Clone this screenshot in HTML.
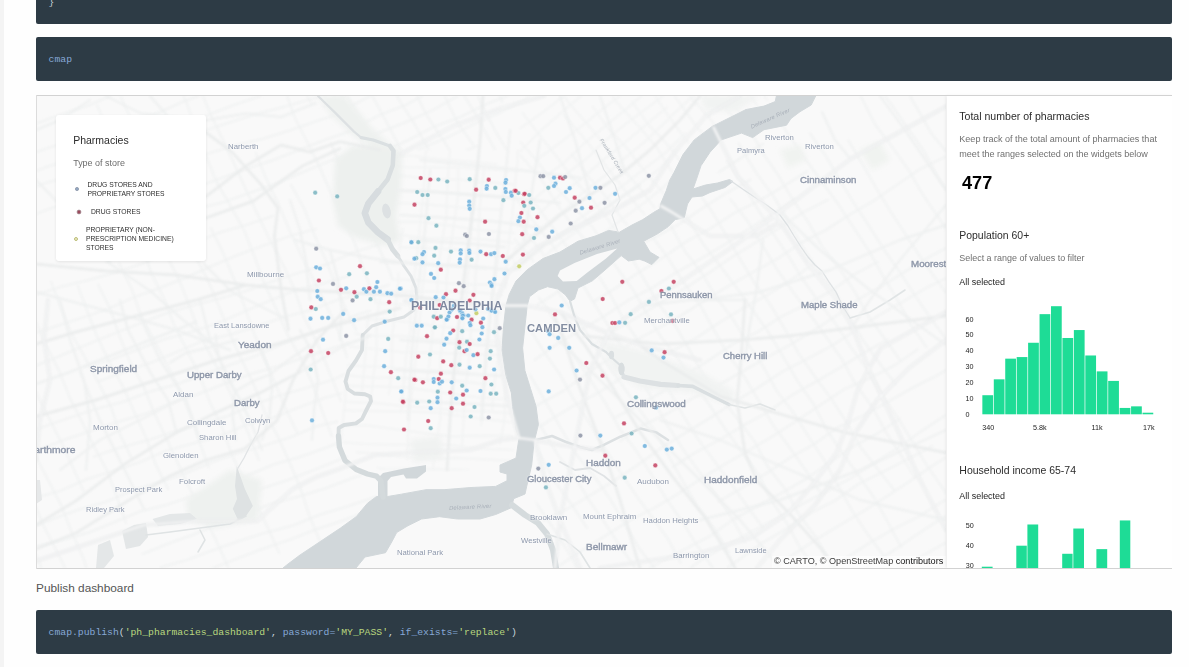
<!DOCTYPE html>
<html><head><meta charset="utf-8">
<style>
*{box-sizing:border-box;margin:0;padding:0}
html,body{width:1189px;height:667px;overflow:hidden;background:#fefefe;font-family:"Liberation Sans",sans-serif;}
body{position:relative}
.strip{position:absolute;left:0;top:0;width:4px;height:667px;background:#f4f4f4}
.code{position:absolute;left:36px;width:1136px;background:#2d3b45;border-radius:2px;font-family:"Liberation Mono",monospace;font-size:9.75px;color:#c8d3da;white-space:pre}
.code>span{position:absolute;left:12.6px;line-height:1}
.b{color:#86a8d6}.g{color:#b9d77f}
#c1{top:-10px;height:34px}
#c2{top:37px;height:44px}
#c3{top:610px;height:43.5px}
#map{position:absolute;left:36px;top:96px;width:910px;height:472px;background:#f9f9f9;overflow:hidden}
#panel{position:absolute;left:946.6px;top:96px;width:225.4px;height:472px;background:#fff;box-shadow:-1px 0 3px rgba(0,0,0,.09)}
#clip{position:absolute;left:0;top:0;width:1172px;height:568px;overflow:hidden}
.ln{position:absolute;background:#d2d2d2}
.t{position:absolute;white-space:nowrap;line-height:1}
.ml{position:absolute;white-space:nowrap;line-height:1;color:#8891a2;transform-origin:0 0}
#legend{position:absolute;left:55.5px;top:115px;width:150px;height:146px;background:#fff;border-radius:3px;box-shadow:0 1px 3px rgba(0,0,0,.09)}
</style></head><body>
<div class="strip"></div>
<div class="code" id="c1"><span style="top:8px">}</span></div>
<div class="code" id="c2"><span class="b" style="top:18.4px">cmap</span></div>
<div id="clip">
<div id="map">
<svg width="910" height="472" viewBox="36 96 910 472" style="position:absolute;left:0;top:0">
<defs><filter id="rb" x="-5%" y="-5%" width="110%" height="110%"><feGaussianBlur stdDeviation="0.8"/></filter><filter id="wb" x="-5%" y="-5%" width="110%" height="110%"><feGaussianBlur stdDeviation="0.5"/></filter><filter id="pb" x="-5%" y="-5%" width="110%" height="110%"><feGaussianBlur stdDeviation="2.5"/></filter></defs>
<g filter="url(#rb)"><clipPath id="m1"><polygon points="36,96 320,96 385,150 360,215 400,270 350,340 335,440 380,500 283,568 36,568"/></clipPath>
<g clip-path="url(#m1)" fill="none" stroke="#eff1f1" stroke-width="1.5" stroke-linejoin="round">
<polyline points="-136.3,149.2 -109.7,140.6 -83.3,131.2 -57.4,120.4 -30.7,112.0 -4.7,101.3 21.9,92.7 48.0,82.4 74.1,72.4 100.9,64.1 128.2,57.5 154.3,47.1 180.6,37.5 207.5,29.8 234.9,23.3 261.5,14.6 287.8,4.9 315.1,-2.0 340.7,-13.5"/>
<polyline points="-98.1,168.2 -71.8,158.5 -44.7,151.3 -18.7,140.8 8.0,132.4 34.8,124.1 61.1,114.5 87.7,105.7 113.5,94.7 139.4,84.1 165.7,74.4 192.7,66.9 219.3,58.0 245.7,48.6"/>
<polyline points="-55.3,184.3 -28.6,175.8 -2.7,165.1 23.9,156.3 50.4,147.1 77.4,139.6 104.1,131.1 130.0,120.4 157.2,113.2 182.8,101.8 209.1,92.1 236.0,84.1 261.8,73.1 288.3,64.0"/>
<polyline points="-6.1,184.7 20.9,177.2 47.0,166.8 73.7,158.4 100.2,149.5 126.7,140.4 153.0,130.7 179.9,123.0 206.9,115.4 233.1,105.3 259.6,96.4 285.2,84.6 311.9,76.3 338.5,67.6 365.7,60.3 392.4,52.0"/>
<polyline points="-57.7,222.1 -31.1,213.2 -5.0,203.0 21.1,192.7 47.2,182.4 74.4,175.6 100.5,165.4 126.9,156.0 153.5,147.3 180.8,140.6 206.8,129.9 233.4,121.2 260.1,112.9 287.3,105.9 314.3,98.2 341.2,90.4 367.1,79.7"/>
<polyline points="-54.1,250.2 -28.3,239.1 -2.4,228.5 23.8,218.4 50.0,208.6 76.7,200.0 103.5,191.8 129.7,182.0 155.5,171.1 182.2,162.4 208.7,153.4 235.5,145.3 262.9,138.8 289.6,130.5 316.1,121.3 342.7,112.6 369.4,104.0 395.0,92.5 422.2,85.4"/>
<polyline points="59.6,238.8 85.9,229.4 111.8,218.6 138.7,210.6 164.6,199.8 190.6,189.3 216.9,179.8 243.2,170.1 269.8,161.3 295.9,151.2 322.0,141.0 348.4,131.8 374.8,122.3 401.6,114.1"/>
<polyline points="64.8,254.0 91.0,244.1 117.4,234.8 143.8,225.5 169.9,215.3 197.2,208.5 224.5,201.9 250.9,192.5 277.3,183.1 303.1,172.0 329.0,161.4 355.4,152.2 381.8,142.6"/>
<polyline points="-69.7,335.8 -43.3,326.4 -17.5,315.3 9.1,306.4 34.8,295.2 61.5,286.6 88.8,280.0 115.8,272.3 142.4,263.6 168.3,252.9 194.5,242.9 220.4,232.2 247.4,224.6 273.9,215.6"/>
<polyline points="-26.1,350.7 1.0,343.5 27.8,335.4 54.4,326.8 81.1,318.1 107.6,309.1 133.3,297.6 159.5,288.0 185.6,277.7 211.3,266.2 237.1,255.2 263.4,245.6 289.7,236.1 316.8,228.6"/>
<polyline points="8.4,373.3 35.5,365.8 61.5,355.3 87.3,344.4 113.3,333.9 139.4,323.6 165.5,313.5 192.4,305.5 219.6,298.6 246.6,290.9 272.9,281.3 299.5,272.6 326.3,264.5 352.0,252.9 378.7,244.5 405.7,237.0 432.4,228.6 459.1,220.0 485.2,210.0"/>
<polyline points="84.2,366.9 111.3,359.7 137.4,349.5 163.6,339.5 190.7,332.1 217.3,323.4 243.0,312.1 268.8,301.1 294.8,290.5 322.1,283.7 349.0,275.9"/>
<polyline points="97.8,381.7 124.0,371.8 150.6,362.9 176.5,352.1 202.3,341.1 229.7,334.8 256.5,326.5 283.0,317.4 310.1,310.2 336.3,300.4 363.3,292.7 390.1,284.5 415.9,273.3 441.8,262.7 468.0,252.6 494.1,242.5"/>
<polyline points="-10.2,443.7 17.1,436.7 43.3,426.9 69.7,417.6 96.3,408.9 123.4,401.7 149.6,391.8 176.7,384.3 203.0,374.7 229.3,365.3 255.7,355.9 281.3,344.2 307.8,335.0 333.8,324.6 359.7,313.7 386.9,306.8"/>
<polyline points="40.5,449.0 66.7,439.0 93.2,430.1 119.8,421.3 146.7,413.5 172.5,402.4 199.1,393.7 225.2,383.5 251.5,373.7 278.5,366.2 305.0,357.2 331.6,348.5 358.5,340.5 385.5,333.0 411.7,323.1 438.2,314.1 464.6,304.6"/>
<polyline points="93.2,456.9 119.6,447.7 146.8,440.6 173.5,432.0 200.3,424.0 227.3,416.2 253.0,405.0 279.4,395.6 306.4,387.9 333.1,379.6 358.7,367.8 384.4,356.6 410.8,347.2"/>
<polyline points="7.1,506.2 34.0,498.3 60.9,490.6 86.6,479.2 113.4,470.9 140.0,462.1 165.7,450.9 192.8,443.5 219.9,436.2 245.7,425.0 272.7,417.7 298.8,407.4 325.1,397.8 352.2,390.6"/>
<polyline points="0.4,539.3 26.6,529.4 52.7,519.0 79.0,509.5 106.0,501.9 131.8,490.7 158.5,482.4 185.1,473.5 210.9,462.5 237.4,453.4 264.3,445.6 291.0,437.0 316.9,426.3 344.4,420.1 371.3,412.4 398.5,405.3 424.1,393.8"/>
<polyline points="-18.0,566.5 8.0,555.9 34.5,547.0 61.8,540.2 88.8,532.5 114.7,522.0 140.7,511.3 167.9,504.4 194.4,495.5 221.2,487.1 246.9,475.8 272.7,464.8 299.7,457.0 326.1,447.8 352.0,437.0 379.4,430.5 406.1,422.0 433.0,414.2 458.7,402.9 485.8,395.5"/>
<polyline points="155.7,525.9 182.3,517.2 209.5,510.1 235.5,499.6 261.4,488.7 288.0,480.0 314.1,469.9 340.1,459.4 366.3,449.5 392.4,439.2 418.8,429.8 445.3,420.9"/>
<polyline points="142.0,554.3 167.9,543.7 194.3,534.2 220.1,523.2 246.5,513.7 272.4,503.2 299.7,496.3 326.4,488.0 352.6,478.0 379.3,469.4 406.6,462.9"/>
<polyline points="160.1,567.5 187.1,559.9 213.3,550.0 239.7,540.8 266.4,532.4 293.6,525.2 319.6,514.7 346.4,506.8 373.0,498.0 399.5,488.8 425.6,478.6 451.7,468.4"/>
<polyline points="25.7,633.7 51.7,623.3 77.7,612.7 103.6,602.0 130.9,595.1 158.0,587.9 184.7,579.4 210.7,569.0 236.8,558.6 263.0,548.8 289.5,539.9 315.6,529.5 342.2,520.7 368.4,511.0"/>
<polyline points="207.1,602.4 234.4,595.6 260.5,585.4 286.7,575.6 312.5,564.3 339.0,555.2 365.6,546.5 392.2,537.9 418.3,527.8 445.0,519.2 470.9,508.3 497.3,498.9"/>
<polyline points="95.9,658.8 122.2,649.2 148.4,639.4 175.2,631.4 201.9,622.8 228.9,615.2 255.6,606.8 282.4,598.6 309.4,590.9 335.5,580.7 361.6,570.4 388.8,563.4"/>
<polyline points="168.3,654.2 195.4,647.0 222.5,639.7 249.1,630.8 275.8,622.4 302.6,614.2 328.3,602.7 354.7,593.5 381.1,584.2 408.0,576.4 434.8,568.2 461.6,560.0 487.9,550.4 514.8,542.4"/>
<polyline points="170.9,682.3 197.0,671.9 223.5,662.8 249.6,652.6 276.9,645.9 303.6,637.4 330.3,629.2 357.0,620.7 383.8,612.4 410.2,603.0 435.8,591.5"/>
<polyline points="412.9,84.7 423.6,110.5 437.0,135.2 447.1,161.4 459.6,186.5 472.7,211.3 484.5,236.7 494.3,263.0 506.7,288.1 516.5,314.4 525.6,341.0 537.3,366.4 549.4,391.7"/>
<polyline points="384.7,82.0 395.5,107.8 409.0,132.5 421.7,157.4 433.7,182.8 443.4,209.1 455.4,234.4 466.1,260.3 479.4,285.0 492.1,310.0 503.6,335.5 513.3,361.8 523.3,388.1 533.6,414.1 545.9,439.3"/>
<polyline points="344.9,48.0 354.3,74.5 367.0,99.4 376.1,126.0 385.9,152.4 400.0,176.7 411.6,202.2 421.6,228.4 431.2,254.8 443.4,280.0 456.3,304.9 469.1,329.8 478.4,356.3 491.4,381.2 502.4,407.0"/>
<polyline points="332.7,67.4 342.4,93.8 353.8,119.4 363.5,145.7 374.3,171.5 387.4,196.4 397.1,222.7 409.1,248.0 422.9,272.5 436.3,297.2 447.2,323.0 458.4,348.6 470.2,374.0 482.7,399.1 494.1,424.7 505.6,450.2 514.7,476.8 528.0,501.5"/>
<polyline points="330.8,142.6 341.6,168.5 351.8,194.6 364.8,219.5 377.2,244.6 389.2,269.9 398.5,296.4 410.0,321.9 422.5,347.0"/>
<polyline points="263.5,39.5 273.1,65.9 285.4,91.0 294.7,117.5 307.5,142.5 319.9,167.7 331.0,193.4 343.6,218.4 355.1,243.9 364.0,270.6 373.8,296.9 384.2,322.9 395.6,348.5"/>
<polyline points="290.8,184.4 304.4,209.0 314.5,235.2 326.1,260.7 336.4,286.7 347.3,312.5 359.9,337.6 373.3,362.2 382.5,388.8 395.6,413.6 406.8,439.3 418.7,464.7"/>
<polyline points="255.6,152.5 266.1,178.5 278.3,203.7 289.2,229.5 301.0,254.9 313.6,279.9 326.1,305.0 338.1,330.3 346.9,357.0 358.1,382.7 370.5,407.9 379.7,434.4 388.9,461.0 401.0,486.2 414.2,511.0 426.9,536.0 439.8,560.9"/>
<polyline points="178.5,33.9 189.4,59.7 199.0,86.1 209.5,112.0 221.7,137.3 233.7,162.6 245.2,188.1 257.2,213.4 269.3,238.7 282.5,263.5 294.3,288.8 303.1,315.6 316.0,340.5 327.0,366.2 337.5,392.2 347.2,418.5"/>
<polyline points="175.3,77.8 186.8,103.3 196.1,129.9 206.2,156.0 216.5,182.0 230.8,206.3 244.4,230.9 254.6,257.0 264.3,283.4 276.1,308.8 287.4,334.4 301.2,358.9 312.8,384.4 322.1,410.9 332.2,437.0"/>
<polyline points="210.5,227.6 223.0,252.7 233.8,278.6 243.9,304.7 253.2,331.2 263.8,357.1 274.9,382.8 285.6,408.7 297.8,434.0"/>
<polyline points="104.9,54.5 114.3,81.0 125.2,106.8 137.7,131.9 150.8,156.7 163.0,181.9 173.3,208.0 183.6,234.0 196.7,258.9 209.6,283.8 220.2,309.7 230.7,335.6 242.3,361.2 254.5,386.4 264.9,412.4 278.1,437.1 289.7,462.6 300.5,488.5 309.2,515.2 319.9,541.1 329.7,567.4"/>
<polyline points="96.7,104.2 107.6,130.0 120.4,155.0 134.1,179.5 145.3,205.2 155.7,231.2 167.4,256.6 179.8,281.8 190.2,307.8 199.7,334.2 212.6,359.1 226.0,383.8 237.7,409.2 249.0,434.9 259.2,461.0"/>
<polyline points="129.9,222.2 142.6,247.2 151.6,273.8 164.1,298.9 174.1,325.1 186.9,350.0 199.5,375.1 209.5,401.3 221.8,426.4 231.1,453.0 242.7,478.4 255.7,503.3 268.2,528.4 279.6,554.0"/>
<polyline points="118.9,262.9 131.4,288.0 140.4,314.6 153.5,339.4 166.7,364.2 179.4,389.2 190.5,414.9 199.4,441.6 208.8,468.0"/>
<polyline points="97.6,283.9 110.2,308.9 119.3,335.5 129.7,361.5 143.4,386.1 153.9,412.1 165.8,437.4 177.6,462.8 189.5,488.1 202.1,513.2 215.1,538.1 226.6,563.6 237.7,589.3 246.3,616.1"/>
<polyline points="77.5,285.0 87.3,311.2 97.5,337.4 109.6,362.6 123.2,387.2 134.6,412.8 146.4,438.2 155.7,464.7 168.6,489.6"/>
<polyline points="50.8,281.0 60.7,307.2 71.2,333.2 85.0,357.7 98.3,382.4 111.2,407.4 119.9,434.1 132.2,459.3"/>
<polyline points="25.5,292.6 34.7,319.2 45.8,344.9 58.6,369.8 69.0,395.8 81.4,420.9 93.8,446.1 107.2,470.8 116.9,497.1 126.2,523.6"/>
<polyline points="5.3,312.2 16.5,337.8 25.7,364.4 35.3,390.7 47.8,415.8 60.6,440.8 72.4,466.2 83.8,491.7"/>
<polyline points="-92.2,176.1 -82.0,202.2 -71.4,228.1 -59.9,253.7 -47.2,278.7 -34.7,303.7 -22.6,329.0 -12.5,355.2 1.0,379.8 13.5,404.9 23.3,431.2 35.7,456.3 48.7,481.2 61.5,506.1 71.7,532.2 83.2,557.8 91.8,584.6 101.3,611.0 110.8,637.4 123.8,662.3"/>
<polyline points="-116.2,166.4 -104.4,191.8 -91.8,216.8 -80.2,242.3 -69.5,268.2 -58.9,294.1 -48.5,320.1 -38.3,346.3 -27.1,371.9 -13.5,396.5 -3.5,422.7 9.2,447.7 20.5,473.3 32.6,498.6 43.0,524.6 55.9,549.5 68.3,574.6 80.6,599.8"/>
<polyline points="-63.0,328.6 -51.3,354.1 -42.3,380.7 -30.7,406.2 -17.9,431.1 -7.9,457.3 3.0,483.1 12.6,509.5 26.4,534.0 38.1,559.5 48.2,585.6 58.5,611.7"/>
<polyline points="-164.5,174.6 -152.0,199.8 -143.3,226.5 -132.3,252.2 -122.7,278.6 -110.3,303.8 -100.3,330.0 -88.2,355.2 -75.4,380.2 -65.2,406.3 -55.4,432.6 -41.7,457.1 -30.5,482.8 -19.5,508.5 -6.6,533.4 5.4,558.8 18.2,583.7"/>
<polyline points="-166.2,226.1 -153.4,251.0 -140.0,275.7 -128.4,301.2 -118.4,327.4 -106.0,352.5 -94.3,377.9 -82.2,403.2 -72.8,429.7 -62.0,455.5 -48.9,480.3 -36.3,505.4 -25.3,531.1 -14.8,557.1 -4.6,583.2 8.3,608.1 20.5,633.3"/>
<polyline points="-176.4,267.1 -167.2,293.7 -154.7,318.8 -143.6,344.5 -131.4,369.7 -119.7,395.2 -110.1,421.5 -100.6,447.9 -88.0,473.0 -74.9,497.8 -64.5,523.8 -51.6,548.7 -38.1,573.4 -29.0,599.9"/>
</g>
<clipPath id="m2"><polygon points="395,150 520,150 512,275 500,300 515,470 380,470 340,440 350,340 400,270"/></clipPath>
<g clip-path="url(#m2)" fill="none" stroke="#f0f2f2" stroke-width="1.2" stroke-linejoin="round">
<polyline points="360.3,125.6 388.2,127.0 416.3,127.1 444.4,126.9 472.3,129.6 500.1,132.6 527.9,136.7"/>
<polyline points="332.9,131.8 361.0,132.0 389.0,133.3 416.9,135.8 444.6,140.2 472.7,140.1 500.6,142.3 528.4,146.0"/>
<polyline points="274.1,147.1 302.0,150.9 329.9,152.0 358.1,151.2 385.9,155.1 413.9,156.0 441.7,159.7 469.6,161.6 497.5,164.5"/>
<polyline points="353.1,160.5 381.0,164.2 408.8,167.5 436.9,167.4 464.9,167.9 492.9,169.5 520.8,171.8"/>
<polyline points="262.6,168.1 290.4,171.7 318.5,170.9 346.4,173.2 374.3,176.3 402.4,175.7 430.2,179.5 458.3,179.5 486.2,182.2 514.1,184.4"/>
<polyline points="286.4,183.5 314.4,185.0 342.2,187.7 370.2,189.3 398.1,190.9 426.2,190.6 454.1,193.5 482.0,195.7 510.0,196.6 537.8,200.2"/>
<polyline points="305.9,200.1 334.0,200.2 362.0,200.7 389.9,203.0 417.9,203.6 445.8,206.2 473.7,208.9 501.7,209.3"/>
<polyline points="253.9,212.4 281.9,214.1 310.0,213.7 337.9,216.0 365.9,217.5 393.6,221.9 421.7,221.9 449.5,225.7 477.3,229.9 505.2,232.3 533.0,235.0 561.1,234.6 588.9,238.5"/>
<polyline points="371.4,231.0 399.2,234.6 427.0,238.6 455.1,238.1 483.1,239.4 510.9,242.7 539.0,243.0 566.8,247.1 594.8,247.8"/>
<polyline points="260.1,242.8 288.2,243.0 316.2,243.8 344.1,245.9 372.1,247.2 400.2,247.2 428.2,248.3 456.2,249.5 483.9,254.5 511.7,257.7 539.5,261.7"/>
<polyline points="346.2,257.5 374.1,260.1 402.1,261.2 429.9,265.0 457.9,266.9 485.8,268.9"/>
<polyline points="253.1,268.1 281.1,269.4 308.9,272.8 336.9,273.3 364.7,277.6 392.6,279.5 420.6,280.3 448.5,283.3 476.5,284.6 504.5,284.7 532.4,287.9 560.5,287.5 588.3,291.3 616.3,292.0"/>
<polyline points="370.9,291.0 399.0,291.9 427.0,291.6 455.1,291.8 483.1,292.9 510.9,296.5 538.8,298.8 566.7,301.5"/>
<polyline points="254.6,299.6 282.7,299.1 310.8,299.0 338.7,301.0 366.7,301.8 394.6,304.0 422.6,305.6 450.4,308.9 478.3,312.0 506.3,313.1"/>
<polyline points="299.9,318.5 327.9,318.8 356.0,319.0 384.0,319.3 411.9,322.5 439.6,326.6 467.5,329.8 495.5,330.9"/>
<polyline points="236.6,323.6 264.5,324.8 292.4,327.6 320.4,329.2 348.2,333.2 376.0,335.9 404.1,336.1 431.9,339.8 460.0,339.0 488.0,341.1 515.9,342.5 543.9,343.3 572.0,343.5"/>
<polyline points="235.5,341.1 263.5,340.9 291.6,341.4 319.4,344.2 347.4,346.3 375.2,349.0 403.1,352.4 431.1,352.5 459.1,353.6 487.1,354.8 515.2,354.9 542.9,359.5"/>
<polyline points="329.4,363.0 357.3,365.8 385.3,367.0 413.2,369.8 441.1,371.0 469.2,371.3"/>
<polyline points="263.6,365.9 291.4,369.2 319.3,372.0 347.1,375.3 375.0,377.7 403.1,377.9 431.0,379.9 459.0,381.2 486.9,384.4"/>
<polyline points="266.9,382.7 295.0,382.9 322.8,386.6 350.9,385.8 378.9,386.7 406.9,387.7 434.7,391.3 462.5,395.6 490.3,398.5 518.4,399.1 546.2,402.7"/>
<polyline points="262.7,392.7 290.5,395.5 318.4,397.9 346.2,401.8 374.2,402.8 402.1,405.8 430.0,407.9 457.9,410.8 485.9,411.4 513.8,413.7 541.8,415.2 569.8,415.5 597.9,415.7"/>
<polyline points="240.0,403.2 268.1,403.2 296.1,404.0 323.8,409.0 351.8,410.6 379.8,411.2 407.8,411.6 435.8,412.4 463.6,416.5 491.5,419.9 519.3,423.3 547.1,426.6 575.2,426.5 603.1,429.2"/>
<polyline points="338.9,425.9 367.0,425.4 394.8,429.2 422.6,432.9 450.4,436.4 478.6,435.6 506.6,435.8 534.7,435.9 562.7,436.0"/>
<polyline points="337.0,441.8 364.9,444.0 393.0,444.6 421.0,444.5 449.1,444.9 476.9,448.7 504.9,449.5 532.9,451.1 560.8,453.2"/>
<polyline points="261.4,445.3 289.4,446.4 317.3,447.4 345.1,451.7 373.1,453.4 400.9,456.7 428.8,458.7 457.0,457.9 484.9,459.4 512.9,461.1"/>
<polyline points="272.5,460.8 300.5,461.4 328.3,465.3 356.4,465.2 384.2,468.9 412.3,469.2 440.3,469.0 468.3,470.2 496.1,474.3 523.9,478.9 552.0,478.4"/>
<polyline points="291.3,473.7 319.2,476.0 347.1,477.4 374.9,481.3 403.0,482.1 430.7,486.4 458.7,487.0 486.8,487.6 514.6,490.8 542.5,492.7 570.6,492.8"/>
<polyline points="234.6,486.8 262.4,489.9 290.3,492.0 318.4,492.8 346.3,494.1 374.3,495.4 402.1,499.3 430.2,498.9 458.0,502.8 486.1,502.2 514.1,503.0 542.1,504.3 569.9,508.8"/>
<polyline points="274.1,500.7 302.1,502.7 330.0,505.0 357.8,508.4 385.7,511.4 413.6,513.7 441.6,514.6 469.6,515.5 497.6,515.8 525.4,519.8 553.3,522.4 581.2,525.4"/>
<polyline points="623.7,192.3 623.1,220.4 620.5,248.3 616.0,276.0 614.9,304.0 613.8,332.0 611.9,359.9 608.0,387.7 603.7,415.4 603.1,443.5 602.1,471.5"/>
<polyline points="615.8,176.4 613.9,204.3 612.5,232.3 607.2,259.9 603.6,287.7 603.2,315.8 598.3,343.5 598.0,371.6 596.0,399.5 591.0,427.1"/>
<polyline points="595.1,229.9 591.7,257.7 591.1,285.7 589.6,313.7 587.0,341.6 586.2,369.6 583.3,397.5 578.6,425.2"/>
<polyline points="581.7,197.0 580.9,225.1 577.6,252.9 575.4,280.8 571.6,308.6 567.2,336.3 565.5,364.3 563.0,392.1 559.7,420.0 558.1,447.9"/>
<polyline points="566.6,225.9 563.4,253.7 559.7,281.5 557.1,309.4 554.7,337.3 553.1,365.2 552.1,393.2 549.3,421.1 549.1,449.2 546.9,477.1"/>
<polyline points="553.5,223.5 551.2,251.4 548.7,279.3 545.5,307.1 543.4,335.0 539.9,362.8 535.5,390.6 535.0,418.6 531.9,446.5"/>
<polyline points="538.3,178.0 538.5,206.2 535.8,234.0 534.9,262.1 530.8,289.8 526.3,317.5 524.2,345.4 524.0,373.5 521.1,401.4 518.4,429.3"/>
<polyline points="522.4,193.4 520.2,221.4 518.5,249.3 514.0,277.0 513.5,305.1 510.3,332.9 508.7,360.9 505.1,388.7 504.8,416.8 500.0,444.4"/>
<polyline points="517.8,131.1 517.6,159.2 515.0,187.0 512.4,214.9 508.6,242.7 506.6,270.6 505.0,298.6 503.4,326.6 499.2,354.3 494.4,382.0 492.0,409.9"/>
<polyline points="499.0,230.7 498.1,258.8 493.7,286.5 489.6,314.2 486.7,342.1 484.6,370.0 482.0,397.9 481.1,425.9"/>
<polyline points="484.2,168.5 480.6,196.2 478.8,224.2 477.8,252.2 475.2,280.1 474.7,308.2 470.5,335.9 468.8,363.9 464.7,391.6 463.7,419.6 461.8,447.6"/>
<polyline points="476.0,177.7 472.1,205.4 470.5,233.4 468.9,261.4 466.9,289.3 464.0,317.2 461.4,345.0 457.8,372.8"/>
<polyline points="458.1,167.4 458.1,195.6 454.0,223.3 449.8,251.0 446.5,278.9 446.5,307.0 442.7,334.7 440.1,362.6 440.5,390.8 440.4,418.9 435.3,446.5 432.1,474.3"/>
<polyline points="453.0,131.5 449.0,159.3 447.3,187.2 446.5,215.3 441.7,242.9 437.9,270.7 437.4,298.8 433.0,326.5 430.4,354.4 426.9,382.2"/>
<polyline points="426.0,236.9 425.4,265.0 422.0,292.8 419.6,320.7 416.1,348.5 414.3,376.4 410.3,404.2 408.1,432.1 407.3,460.1"/>
<polyline points="427.7,134.4 425.0,162.3 423.8,190.3 420.8,218.2 417.9,246.0 414.8,273.8 410.3,301.6 410.4,329.7 405.9,357.4 403.7,385.3 400.9,413.2"/>
<polyline points="403.0,227.7 398.3,255.3 398.2,283.5 395.0,311.3 392.0,339.1 392.0,367.2 388.7,395.0"/>
<polyline points="384.4,238.4 382.4,266.3 380.4,294.3 376.3,322.0 376.7,350.2 373.3,378.0 370.5,405.8"/>
<polyline points="375.7,228.1 373.2,256.0 369.4,283.8 368.6,311.8 366.4,339.8 364.3,367.7 361.4,395.5"/>
<polyline points="366.8,150.0 364.2,177.9 362.8,205.9 360.1,233.7 355.1,261.4 352.2,289.3 348.8,317.1 347.7,345.1 346.5,373.1 345.0,401.1 342.1,428.9 338.9,456.7"/>
<polyline points="351.8,114.3 349.5,142.2 349.6,170.3 347.9,198.3 347.5,226.3 345.8,254.3 340.5,281.9 337.2,309.8 333.9,337.6 330.1,365.4 326.0,393.1 323.7,421.0 321.3,448.9"/>
<polyline points="330.7,201.7 329.8,229.7 326.4,257.6 324.2,285.5 320.5,313.3 320.2,341.3 319.1,369.4 318.5,397.4 313.9,425.1"/>
<polyline points="313.7,194.7 310.2,222.5 308.0,250.4 307.2,278.5 305.8,306.4 303.7,334.4 302.0,362.3 299.6,390.2"/>
<polyline points="297.2,231.1 297.0,259.2 296.0,287.2 291.4,314.9 288.4,342.7"/>
<polyline points="287.0,163.9 284.0,191.7 279.5,219.5 275.2,247.2 273.6,275.2 272.2,303.1 272.1,331.2"/>
<polyline points="277.1,131.2 276.5,159.2 272.4,187.0 271.2,215.0 265.8,242.6 265.2,270.7 260.4,298.4 259.7,326.4 259.2,354.5"/>
<polyline points="260.8,133.8 260.2,161.9 255.8,189.6 252.0,217.4 247.9,245.1 244.7,273.0 244.7,301.1 241.6,328.9 238.3,356.7 236.3,384.7 232.0,412.4 231.3,440.4"/>
<polyline points="238.8,196.5 235.2,224.3 231.0,252.0 230.7,280.1 228.8,308.1 224.9,335.8"/>
</g>
<clipPath id="m3"><polygon points="520,96 776,96 690,140 660,205 620,230 540,258 512,275 520,150"/></clipPath>
<g clip-path="url(#m3)" fill="none" stroke="#f0f2f2" stroke-width="1.3" stroke-linejoin="round">
<polyline points="489.9,106.6 511.2,88.5 533.2,71.1 554.7,53.1 576.8,36.0 597.2,16.7 619.9,0.1"/>
<polyline points="480.4,135.2 501.5,116.8 524.0,100.0 546.7,83.5 568.7,66.2 589.9,47.9 610.3,28.6 630.2,8.8"/>
<polyline points="498.3,145.7 520.2,128.2 543.1,112.0 565.3,94.9 586.6,76.8 607.1,57.6 628.1,39.1 650.6,22.4 671.4,3.5"/>
<polyline points="501.6,168.4 522.2,149.3 542.1,129.5 563.1,111.0 584.7,93.1 606.7,75.9 629.4,59.3 652.0,42.7 671.8,22.8 694.4,6.1"/>
<polyline points="535.9,160.3 558.6,143.7 580.9,126.7 602.6,109.1 625.0,92.2 645.4,73.0 665.3,53.1"/>
<polyline points="541.2,179.5 563.9,162.9 584.1,143.5 605.7,125.7 627.5,108.1 648.6,89.7"/>
<polyline points="500.1,230.6 521.2,212.3 541.3,192.6 563.8,175.9 586.1,158.9 606.5,139.6 628.2,121.9 650.8,105.3 673.1,88.4 694.2,69.9"/>
<polyline points="538.4,214.5 559.0,195.6 581.5,178.7 602.6,160.4 624.5,142.9 645.8,124.7 667.4,107.0"/>
<polyline points="497.1,265.9 517.4,246.5 539.6,229.4 562.1,212.6 582.4,193.3 604.4,175.9 625.4,157.4 647.1,139.7 667.2,120.1 687.6,100.8 711.1,85.3 733.9,68.9"/>
<polyline points="555.7,239.2 576.7,220.7 599.4,204.3 621.4,186.8 643.4,169.5 665.7,152.5 685.6,132.8"/>
<polyline points="527.2,272.9 547.5,253.6 569.7,236.3 592.6,220.1 614.0,202.0 636.9,185.8 659.4,169.0 679.0,148.9"/>
<polyline points="558.3,273.7 578.7,254.4 600.3,236.6 622.0,219.0 644.7,202.5 666.3,184.6 687.0,165.7"/>
<polyline points="546.3,303.3 566.6,283.9 586.6,264.1 607.5,245.5 628.8,227.4 651.9,211.3 674.6,194.8 696.9,177.8 716.5,157.7 738.9,140.7 760.7,123.2 782.4,105.4"/>
<polyline points="549.1,325.8 571.7,309.2 593.3,291.4 613.7,272.1 635.2,254.2 657.3,236.9 677.1,217.0 698.0,198.3 718.8,179.5"/>
<polyline points="593.7,300.4 614.2,281.3 636.5,264.3 656.7,244.7 679.2,228.1 699.9,209.2 720.3,189.9"/>
<polyline points="584.5,337.5 606.9,320.7 626.8,300.9 648.0,282.5 668.1,263.0 691.1,246.8 713.5,230.0 735.1,212.1 756.1,193.5 776.8,174.7 799.2,157.8"/>
<polyline points="629.3,315.7 649.5,296.3 672.1,279.5 693.9,262.0 714.3,242.8 737.3,226.6"/>
<polyline points="618.2,342.4 640.8,325.8 661.7,307.1 682.1,287.9 703.8,270.2 724.8,251.7 747.8,235.5"/>
<polyline points="679.1,310.4 700.8,292.7 721.1,273.3 742.4,255.1"/>
<polyline points="620.5,373.6 643.5,357.5 666.3,341.0 688.6,324.0 708.1,303.7 728.6,284.6 751.2,268.0 771.0,248.0"/>
<polyline points="634.0,383.0 656.7,366.5 677.7,348.0 698.1,328.8 718.4,309.4 741.4,293.3 763.2,275.7 783.9,256.8 805.5,239.0 828.5,222.8 849.1,203.8"/>
<polyline points="632.5,410.0 654.4,392.6 674.7,373.1 694.8,353.6 715.2,334.3 737.5,317.3 759.2,299.6 780.2,281.0 801.0,262.4"/>
<polyline points="694.3,378.5 714.8,359.3 735.0,339.9 757.6,323.2 778.9,305.1 801.2,288.1 821.3,268.5 844.0,252.0 865.0,233.4"/>
<polyline points="723.4,38.5 738.8,62.1 756.1,84.1 771.9,107.2 790.3,128.4 808.8,149.5 824.6,172.7"/>
<polyline points="659.0,-16.6 678.1,3.9 695.0,26.3 712.2,48.4 729.1,70.7 747.6,91.7 763.6,114.8 779.5,137.9 795.5,161.0"/>
<polyline points="687.6,43.4 706.7,64.0 722.4,87.3 738.0,110.6 755.7,132.3 773.3,154.2 790.7,176.1"/>
<polyline points="626.8,-13.0 645.0,8.3 663.4,29.5 680.9,51.3 696.3,74.8 715.0,95.8 733.1,117.1 748.8,140.4 766.7,161.9 785.2,183.0 801.2,206.1 817.5,228.8"/>
<polyline points="661.9,62.3 678.6,84.7 697.9,105.2 716.5,126.1 733.5,148.4 750.5,170.7"/>
<polyline points="611.8,14.0 628.4,36.5 644.1,59.8 662.9,80.7 679.7,103.0 695.9,125.9 714.6,146.9 730.4,170.0 746.2,193.2 764.3,214.6"/>
<polyline points="651.7,90.8 667.2,114.2 683.7,136.9 702.0,158.2 720.4,179.3 738.2,200.9 755.6,222.9"/>
<polyline points="631.8,101.1 647.9,124.0 667.3,144.4 684.5,166.5 700.0,189.9 716.0,212.9 734.8,233.8 752.7,255.4 769.6,277.7"/>
<polyline points="602.1,83.0 619.3,105.2 638.3,125.8 656.5,147.1 671.4,171.0 687.5,194.0"/>
<polyline points="592.4,106.0 608.5,129.0 628.0,149.3 644.8,171.7 663.1,193.0 679.6,215.6 697.8,236.9 714.8,259.2 730.4,282.5"/>
<polyline points="553.2,79.1 568.6,102.6 587.0,123.8 605.0,145.2 621.6,167.8 640.4,188.7 657.0,211.2 672.4,234.7 689.8,256.6 708.1,277.9"/>
<polyline points="563.2,114.0 581.5,135.2 599.0,157.0 616.1,179.2 633.6,201.1 651.2,222.8 669.3,244.2"/>
<polyline points="571.3,153.6 588.1,176.1 606.6,197.1 622.9,219.9 640.4,241.8 657.5,264.0 674.4,286.3"/>
<polyline points="522.1,112.4 539.1,134.7 556.6,156.5 573.3,179.0 592.3,199.7 609.6,221.7 625.0,245.2 643.2,266.6"/>
<polyline points="519.9,141.4 538.3,162.5 554.6,185.3 573.5,206.1 592.3,226.9 607.9,250.3 625.3,272.2"/>
<polyline points="504.5,137.8 523.4,158.6 541.6,179.9 556.7,203.6 573.1,226.3 591.9,247.2 609.7,268.8 627.4,290.6 643.7,313.3"/>
<polyline points="526.1,190.5 542.5,213.3 559.0,235.9 575.6,258.5 593.4,280.1 609.9,302.7 626.8,325.0 643.0,347.9"/>
<polyline points="517.4,200.4 534.6,222.6 552.0,244.5 567.7,267.7 585.1,289.6"/>
<polyline points="500.2,200.8 518.0,222.4 535.4,244.4 552.7,266.3 569.0,289.1 587.1,310.5 604.7,332.3 621.6,354.6 639.2,376.4"/>
<polyline points="490.1,209.2 507.5,231.1 525.9,252.2 543.6,273.9 561.9,295.2 578.2,318.0 594.8,340.6 613.3,361.6 628.5,385.3"/>
<polyline points="481.7,224.2 500.4,245.1 518.0,266.9 533.7,290.2 553.0,310.6 571.9,331.4 588.4,354.0 605.4,376.3"/>
<polyline points="461.1,229.8 478.7,251.6 496.1,273.5 512.9,295.9 531.0,317.3 548.9,338.8 565.9,361.1"/>
<polyline points="464.7,253.2 483.4,274.1 500.9,296.0 518.2,318.1 534.8,340.6 551.6,363.0 567.2,386.3"/>
</g>
<clipPath id="m4"><polygon points="540,290 700,200 740,140 816,96 946,96 946,568 560,568 535,500 540,430 525,350"/></clipPath>
<g clip-path="url(#m4)" fill="none" stroke="#eff1f1" stroke-width="1.5" stroke-linejoin="round">
<polyline points="399.1,189.8 424.3,177.3 447.6,161.8 471.5,147.2 496.2,133.9 519.1,117.6 542.6,102.4 567.8,90.0 592.4,76.6 616.1,61.7 638.9,45.2 663.9,32.4 688.1,18.4 712.7,4.9 737.5,-8.1"/>
<polyline points="400.6,221.4 424.7,207.2 448.8,192.9 472.1,177.3 495.5,161.9 520.1,148.5 544.6,134.9 568.3,120.0 593.7,107.9 617.9,93.8 640.6,77.2 664.5,62.6 689.3,49.6"/>
<polyline points="464.1,207.4 489.0,194.6 513.1,180.3 537.4,166.4 560.5,150.5 584.5,136.0 608.6,121.9 632.0,106.4 656.5,92.8 680.6,78.5"/>
<polyline points="456.8,246.9 480.2,231.4 505.1,218.6 528.3,202.7 551.6,187.2 575.2,172.1 599.8,158.6 625.0,146.2 649.4,132.5 674.2,119.5 697.1,103.1 720.0,86.9 745.0,74.2 768.7,59.3"/>
<polyline points="427.8,296.4 450.9,280.5 476.2,268.3 500.4,254.2 524.1,239.2 548.0,224.7 571.8,209.9 594.8,193.8 620.1,181.5 644.4,167.6 669.5,155.0 693.1,140.0 717.3,125.8 740.5,110.1"/>
<polyline points="549.5,243.1 574.6,230.5 599.2,217.2 622.5,201.5 646.6,187.3 671.6,174.6 695.3,159.6 720.1,146.6 743.1,130.4 766.6,115.1 791.0,101.4 814.1,85.5 837.6,70.2 862.6,57.5 886.4,42.8"/>
<polyline points="429.4,348.1 452.7,332.5 478.1,320.4 501.5,305.0 525.7,290.9 548.8,274.9 573.1,261.0 596.9,246.3 620.9,231.8 644.0,215.9 667.4,200.5 692.7,188.2 716.5,173.6 740.2,158.5 763.7,143.4"/>
<polyline points="439.4,367.5 463.0,352.3 486.1,336.5 510.8,323.2 533.9,307.2 557.5,292.2 582.7,279.7 605.8,263.9 629.9,249.6 655.0,237.0 679.7,223.8 702.8,207.8 726.5,192.8 751.1,179.5"/>
<polyline points="592.5,302.5 616.3,287.7 639.5,271.9 663.3,257.3 686.4,241.4 711.1,228.1 734.6,212.8 759.8,200.3 783.9,186.1 807.5,171.0"/>
<polyline points="534.0,360.3 556.9,344.1 580.9,329.8 605.1,315.6 628.5,300.2 653.3,287.1 676.9,272.1 701.4,258.4 725.5,244.1 748.9,228.8 772.7,214.0 795.7,198.0"/>
<polyline points="590.6,347.0 613.6,330.8 637.9,316.9 661.6,302.0 685.7,287.8 709.3,272.7 732.4,256.8 756.3,242.2 780.0,227.3 803.6,212.1 828.6,199.4"/>
<polyline points="513.8,417.5 538.6,404.5 563.2,391.0 585.8,374.4 609.1,358.8 632.0,342.4 656.6,329.1 681.1,315.5 704.7,300.5 728.6,285.8 753.1,272.2 777.6,258.6 800.9,243.0 825.8,230.0 849.3,214.8 873.5,200.8 896.7,185.0 919.8,169.1 945.1,156.8 969.7,143.3"/>
<polyline points="455.0,480.6 478.4,465.2 502.2,450.5 526.2,436.1 549.4,420.3 573.4,405.9 598.2,392.9 621.8,377.6 647.0,365.3 671.4,351.4 696.0,338.1 719.3,322.6 743.3,308.1 767.8,294.6 791.5,279.5 814.3,263.2"/>
<polyline points="613.5,418.1 638.6,405.5 662.8,391.5 685.7,375.1 709.2,360.0 732.5,344.4 757.7,331.9 781.2,316.6 806.5,304.3 831.1,291.0 854.0,274.7 878.6,261.3"/>
<polyline points="619.7,441.3 642.8,425.3 668.2,413.2 692.0,398.5 717.1,386.0 741.4,372.0 765.8,358.2 790.3,344.6 814.2,330.1 837.7,314.8 860.3,298.1 884.8,284.4 908.5,269.5 932.5,255.1 957.5,242.3 980.3,226.0"/>
<polyline points="497.4,549.8 520.7,534.1 544.8,519.9 569.9,507.4 594.0,493.1 617.8,478.4 641.0,462.6 663.8,446.2 687.6,431.5 711.6,417.0 735.1,401.7 758.9,387.0 782.4,371.7 807.3,358.9 832.0,345.6 855.5,330.3 879.1,315.2 903.4,301.4 927.6,287.1 952.9,274.9 976.4,259.8"/>
<polyline points="672.0,467.5 695.6,452.4 720.4,439.3 744.4,424.9 769.0,411.4 791.9,395.2 816.3,381.5 840.5,367.3 864.3,352.5 888.8,339.1"/>
<polyline points="535.4,581.7 558.8,566.2 581.9,550.3 605.7,535.6 629.4,520.6 654.4,507.8 678.5,493.7 701.8,478.1 725.8,463.6 750.1,449.7 774.1,435.3 797.6,420.1 821.0,404.6 844.4,389.1 870.3,377.8 895.2,365.0 918.3,349.0"/>
<polyline points="718.1,501.8 742.3,487.7 766.3,473.3 789.7,457.8 814.1,444.1 837.0,428.0 862.5,415.9 887.0,402.3 911.3,388.5 936.3,375.8 960.5,361.5 983.6,345.6"/>
<polyline points="565.2,620.5 589.9,607.3 613.1,591.6 636.2,575.6 660.6,561.9 685.5,548.8 710.3,535.9 733.2,519.5 757.7,506.0 782.3,492.6 806.6,478.5 829.7,462.7 852.7,446.6 877.5,433.5 900.8,418.0"/>
<polyline points="657.2,590.8 680.4,575.0 703.3,558.7 727.7,544.9 752.1,531.3 777.0,518.2 801.4,504.5 826.2,491.4 850.9,478.2 874.4,462.9 898.0,447.9 920.8,431.5 944.3,416.1 968.5,402.1"/>
<polyline points="692.0,587.9 717.1,575.5 739.9,559.0 762.8,542.7 786.9,528.5 810.4,513.2 835.3,500.3 858.2,484.1 883.4,471.7 908.4,458.9 933.1,445.6"/>
<polyline points="624.5,655.0 648.3,640.3 671.9,625.3 695.9,610.8 720.4,597.2 745.2,584.2 770.1,571.1 792.9,554.8 816.3,539.4 840.2,524.8 864.4,510.7 888.0,495.7 911.4,480.1 934.6,464.4 958.5,449.8 982.8,435.9 1008.3,424.0 1033.3,411.3 1058.1,398.1"/>
<polyline points="773.8,602.7 796.6,586.3 821.1,572.7 845.4,558.7 868.8,543.4 893.0,529.3 918.2,516.8 941.9,501.9 966.1,487.8 989.4,472.2 1012.9,457.0 1037.9,444.3 1060.6,427.6"/>
<polyline points="726.4,649.3 751.0,635.9 774.7,621.1 799.1,607.2 822.9,592.5 847.1,578.4 871.3,564.3 895.1,549.5 918.2,533.6 941.6,518.3 966.9,506.0 991.2,492.0 1014.2,476.0 1039.4,463.5"/>
<polyline points="622.7,735.7 646.8,721.4 671.1,707.4 694.5,691.9 718.8,678.1 742.0,662.3 766.3,648.4 790.7,634.7 813.8,618.7 837.9,604.5 861.1,588.8 885.4,574.8 910.7,562.6 935.0,548.6 959.6,535.2 984.2,521.7 1007.1,505.4 1032.3,493.1 1056.7,479.3"/>
<polyline points="775.6,664.0 800.9,651.7 824.9,637.4 849.5,623.9 872.4,607.6 897.0,594.3 919.8,577.9 943.3,562.6 967.2,548.0 990.2,532.0 1014.9,518.6 1038.5,503.5"/>
<polyline points="763.9,699.0 788.0,684.8 812.7,671.5 836.5,656.8 861.2,643.5 885.7,629.9 908.3,613.2 932.6,599.3 955.9,583.7 980.4,570.0 1004.5,555.8 1029.0,542.2 1051.7,525.6"/>
<polyline points="904.0,34.3 921.3,56.5 935.9,80.4 952.7,102.9 967.3,126.7 981.1,151.2 997.9,173.7 1011.2,198.4 1025.8,222.3 1042.3,245.0 1058.7,267.7 1073.9,291.2 1087.6,315.7 1102.6,339.4 1119.5,361.8 1136.5,384.2 1152.7,407.0"/>
<polyline points="813.6,-57.3 827.9,-33.2 843.7,-10.0 860.3,12.6 873.6,37.3 888.8,60.9 903.3,84.8 917.5,109.0 931.3,133.4 949.2,155.1 965.3,178.1 981.9,200.7 996.9,224.3 1010.4,249.0 1024.6,273.1 1042.0,295.2 1058.4,317.9 1072.1,342.4 1086.6,366.4"/>
<polyline points="829.1,11.8 845.0,34.8 858.9,59.2 874.1,82.7 891.5,104.8 907.4,127.8 923.7,150.7 937.0,175.4 951.9,199.1 969.1,221.3 985.4,244.1 1000.7,267.6 1015.6,291.3"/>
<polyline points="800.8,6.2 815.3,30.2 831.0,53.4 847.8,75.8 862.6,99.6 875.3,124.8 892.3,147.1 908.6,169.9 922.5,194.2 938.4,217.4 954.1,240.6 968.8,264.4 984.5,287.5 998.9,311.6 1013.7,335.4"/>
<polyline points="848.2,140.0 862.4,164.1 876.4,188.4 891.1,212.3 906.4,235.7 921.7,259.2 938.1,281.9 954.6,304.6"/>
<polyline points="809.4,132.7 825.6,155.6 839.7,179.8 854.2,203.7 869.7,227.0 884.7,250.7 900.9,273.6 916.1,297.1 931.9,320.2 948.9,342.5 964.5,365.8 980.1,389.1 993.0,414.1 1008.3,437.5 1024.1,460.7 1040.3,483.5"/>
<polyline points="730.5,41.3 743.9,66.0 759.3,89.4 774.7,112.8 789.6,136.5 805.7,159.5 822.1,182.2 838.7,204.8 854.0,228.2 869.4,251.6 883.0,276.2 897.6,300.1 910.9,324.9 926.9,347.8"/>
<polyline points="733.9,102.9 748.6,126.7 761.7,151.6 777.8,174.5 792.1,198.6 807.9,221.7 821.9,246.1 839.3,268.1 854.6,291.6 868.3,316.1 884.8,338.8 901.1,361.6"/>
<polyline points="665.9,33.0 682.5,55.6 698.0,78.9 714.3,101.7 728.8,125.7 742.4,150.3 757.1,174.1 773.8,196.6 788.1,220.8 801.6,245.4 816.9,268.8 834.3,290.9 848.4,315.2 862.4,339.4 878.8,362.2 895.8,384.5"/>
<polyline points="696.6,114.5 710.3,139.0 727.1,161.4 743.2,184.4 757.4,208.5 772.2,232.3 788.1,255.4 802.7,279.3 818.9,302.2 836.0,324.4 851.3,347.9 868.0,370.4 882.2,394.6 897.7,417.9 912.5,441.7 927.0,465.6 943.0,488.6 958.0,512.3"/>
<polyline points="729.9,198.6 747.3,220.7 762.0,244.5 776.4,268.5 792.6,291.4 809.5,313.8 825.9,336.6 842.1,359.5 855.5,384.1 872.1,406.7 885.5,431.4 900.8,454.9 915.7,478.6"/>
<polyline points="664.5,140.3 680.5,163.2 694.7,187.4 711.1,210.2 725.4,234.2 739.7,258.4 754.1,282.4 770.6,305.1 784.9,329.1 798.7,353.6 814.8,376.5 831.5,399.1 846.8,422.5 860.5,447.0 877.8,469.1 895.1,491.3"/>
<polyline points="658.5,171.5 671.6,196.3 688.3,218.9 702.5,243.0 719.6,265.3 736.6,287.6 752.9,310.5 769.2,333.3 783.5,357.4 797.8,381.5 813.8,404.5 826.6,429.5 842.2,452.8 858.6,475.5 874.7,498.5 888.3,523.0 901.5,547.8"/>
<polyline points="565.5,61.3 578.6,86.2 594.1,109.5 609.0,133.2 625.1,156.2 639.2,180.4 654.9,203.6 671.1,226.4 684.7,251.0 701.9,273.2 716.2,297.3 733.3,319.6 747.8,343.6 763.4,366.8 777.0,391.4 794.2,413.6 809.0,437.4 824.5,460.7 837.9,485.4 851.6,509.9 866.9,533.3 883.7,555.8"/>
<polyline points="577.9,116.8 594.1,139.6 607.9,164.1 622.5,188.0 638.6,210.9 651.7,235.8 668.3,258.4 683.3,282.0 700.0,304.6 713.5,329.2 727.4,353.5 744.0,376.2 758.3,400.2 772.6,424.4 789.2,447.0 805.4,469.9 820.7,493.3"/>
<polyline points="539.2,114.5 554.7,137.8 569.7,161.5 583.5,185.9 600.3,208.4 614.1,232.8 630.2,255.7 644.5,279.8 658.7,304.0 675.8,326.3 689.8,350.5 703.5,375.0 720.4,397.5 738.0,419.4 754.8,441.9 767.8,466.8 785.1,489.0 798.4,513.7 815.2,536.2 829.2,560.5"/>
<polyline points="527.4,124.1 543.0,147.4 556.2,172.2 570.6,196.2 584.5,220.6 598.3,245.0 616.1,266.8 632.7,289.4 646.7,313.7 661.4,337.5 678.9,359.6 694.0,383.2 710.2,406.0 725.5,429.5 742.0,452.1 758.6,474.7 771.1,500.0 786.8,523.2 800.2,547.9 817.0,570.4"/>
<polyline points="503.4,130.7 517.6,154.9 534.2,177.5 548.2,201.8 563.4,225.3 580.1,247.8 595.6,271.2 610.5,294.9 623.7,319.7 639.6,342.7 656.0,365.5 669.0,390.4 682.9,414.8 697.7,438.6 714.4,461.1 731.1,483.6 747.3,506.5 764.0,529.0"/>
<polyline points="534.2,212.3 550.0,235.4 567.2,257.6 581.2,281.9 595.6,305.9 610.7,329.5 625.7,353.1 640.2,377.1 653.7,401.7 668.0,425.8 683.1,449.4 699.5,472.1 716.0,494.8 731.9,517.9 745.4,542.5"/>
<polyline points="502.2,199.5 515.1,224.5 532.5,246.5 547.1,270.5 560.5,295.2 577.0,317.8 591.8,341.6 607.6,364.7 623.9,387.5 640.1,410.4 656.5,433.1 669.7,457.9 683.6,482.3 697.2,506.9 714.6,528.9 729.0,553.0"/>
<polyline points="516.3,261.3 529.5,286.1 547.1,308.1 561.1,332.4 575.0,356.8 590.5,380.1 605.7,403.6 619.2,428.2 636.1,450.6 651.2,474.2 665.8,498.1 682.0,521.0 696.6,544.8 712.7,567.8 728.1,591.2"/>
<polyline points="497.7,281.8 512.9,305.3 529.4,328.0 544.1,351.9 560.2,374.8 573.7,399.4 589.2,422.7 603.7,446.7 619.1,470.1 634.7,493.4 651.2,516.0 667.8,538.6 681.0,563.4"/>
<polyline points="457.8,266.0 474.4,288.6 490.9,311.3 504.6,335.8 520.0,359.1 534.7,383.0 548.8,407.2 562.8,431.5 577.2,455.6 595.0,477.4 611.0,500.4 625.0,524.7 639.4,548.7 656.7,570.9 673.4,593.4 689.5,616.3"/>
<polyline points="423.4,242.8 438.8,266.2 455.7,288.6 471.0,312.0 483.9,337.0 498.5,361.0 514.2,384.2 529.7,407.5 543.8,431.7 558.4,455.6 575.5,477.9 590.1,501.8 606.1,524.8 621.4,548.3 637.7,571.0 653.3,594.3 669.0,617.5 684.4,640.8 701.3,663.3"/>
<polyline points="435.3,293.3 449.5,317.5 465.6,340.4 481.3,363.6 497.3,386.6 510.8,411.2 527.6,433.7 541.9,457.8 555.5,482.4 572.0,505.0 587.4,528.4"/>
<polyline points="418.3,317.2 433.4,340.8 448.9,364.1 462.9,388.4 478.8,411.5 494.2,434.9 508.6,458.9 522.4,483.3 538.4,506.3 554.2,529.5 569.0,553.2 582.5,577.8 599.4,600.3 612.8,625.0"/>
<polyline points="364.2,285.5 381.1,308.0 394.8,332.4 410.4,355.7 425.3,379.4 440.4,403.0 453.9,427.6 468.4,451.6 485.9,473.6 500.7,497.3 516.1,520.7 531.5,544.1 545.3,568.5 561.2,591.6 576.6,615.0 590.4,639.4 606.3,662.5 621.8,685.8"/>
<polyline points="398.9,386.2 414.7,409.3 431.9,431.5 446.1,455.6 461.1,479.3 475.2,503.5 489.5,527.6 506.7,549.9 523.0,572.6 539.8,595.1 553.2,619.8 569.9,642.4 586.3,665.1 599.9,689.7"/>
<polyline points="282.7,252.0 298.2,275.4 315.4,297.6 329.6,321.7 345.1,345.1 359.9,368.8 373.1,393.6 387.5,417.7 401.8,441.8 419.2,463.8 435.5,486.7 450.8,510.1 468.1,532.3 481.1,557.2 497.4,580.0 513.5,602.9 529.3,626.1 545.2,649.1 558.5,673.9 573.4,697.6 588.6,721.1"/>
</g>
<clipPath id="m5"><polygon points="300,96 520,96 520,150 395,150 385,150"/></clipPath>
<g clip-path="url(#m5)" fill="none" stroke="#eff1f1" stroke-width="1.5" stroke-linejoin="round">
<polyline points="258.3,79.0 284.2,68.1 310.0,57.3 334.6,43.7 359.2,30.2 383.6,16.4 409.3,5.1"/>
<polyline points="297.2,78.1 322.3,65.6 348.3,55.1 373.0,41.8 399.3,31.8 424.6,20.0"/>
<polyline points="290.7,94.7 316.3,83.3 341.3,70.7 366.3,58.0 392.4,47.8 417.4,35.1 443.3,24.3"/>
<polyline points="322.8,106.8 347.9,94.4 373.9,83.9 398.2,69.6 423.4,57.5 449.1,46.3"/>
<polyline points="348.9,107.4 373.5,94.1 399.9,84.3 425.3,72.6"/>
<polyline points="329.8,141.0 354.7,128.1 379.5,115.1 405.7,105.0 430.3,91.6 456.7,81.8 481.4,68.5"/>
<polyline points="304.7,169.4 329.7,156.8 355.3,145.4 380.0,132.2 406.2,122.0 431.8,110.6 456.2,96.8 480.6,83.0"/>
<polyline points="307.9,187.2 332.8,174.4 358.6,163.3 383.7,150.9 409.3,139.7 434.1,126.6 460.5,117.0 485.6,104.4 511.7,94.3"/>
<polyline points="373.4,173.1 397.9,159.3 423.3,147.4 449.2,136.7 474.1,123.9 499.8,112.7 524.5,99.5"/>
<polyline points="376.1,193.3 400.6,179.6 426.7,169.4 451.3,155.8 477.7,146.0"/>
<polyline points="402.1,205.9 427.2,193.5 453.2,183.1 478.6,171.2 504.9,161.3"/>
<polyline points="372.9,236.2 398.3,224.4 422.8,210.7 447.6,197.6 472.8,185.3 499.2,175.8 525.4,165.6"/>
<polyline points="413.8,234.0 440.0,224.1 464.9,211.1"/>
<polyline points="402.3,264.0 427.6,252.1 452.5,239.3 478.6,228.9"/>
<polyline points="478.2,19.8 491.6,44.4 507.0,67.8 520.3,92.5 532.7,117.6"/>
<polyline points="445.3,6.3 461.0,29.5 474.0,54.3 489.4,77.8 502.7,102.4"/>
<polyline points="428.5,7.3 443.6,30.9 455.3,56.5 470.0,80.4 482.4,105.5 495.0,130.6 509.5,154.6"/>
<polyline points="404.2,-6.6 417.9,17.8 431.5,42.3 446.9,65.7 460.6,90.2 475.6,113.8 488.8,138.5 502.4,163.0 516.6,187.2"/>
<polyline points="404.6,24.0 419.4,47.8 431.4,73.2 445.3,97.5 457.6,122.7 473.9,145.6"/>
<polyline points="385.9,43.2 399.2,67.9 414.5,91.4 427.4,116.3 443.0,139.6 457.8,163.4 473.5,186.7"/>
<polyline points="371.0,54.8 387.0,77.9 400.6,102.4 415.7,126.0 429.1,150.6 441.8,175.6"/>
<polyline points="334.4,30.5 346.5,55.9 362.9,78.7 376.4,103.3 389.7,127.9 402.6,152.8 417.7,176.4"/>
<polyline points="335.0,70.0 346.7,95.5 361.1,119.5 375.5,143.6 391.1,166.9 405.7,190.8 418.2,215.9 431.2,240.8"/>
<polyline points="316.7,68.8 331.6,92.6 345.9,116.7 357.4,142.3 369.3,167.8 382.5,192.5"/>
<polyline points="304.6,91.1 317.9,115.7 331.8,140.0 347.5,163.3 361.1,187.8 373.9,212.7 387.2,237.4"/>
<polyline points="305.3,112.6 317.1,138.1 330.5,162.7 343.8,187.4 359.7,210.5"/>
<polyline points="293.1,141.6 305.9,166.5 319.1,191.2 333.3,215.3 348.1,239.1 361.2,263.9"/>
<polyline points="270.4,148.0 284.7,172.1 297.2,197.2 313.4,220.2"/>
</g></g>
<g filter="url(#pb)">
<polygon points="335.0,160.0 352.0,146.0 388.0,144.0 402.0,152.0 401.0,190.0 396.0,215.0 400.0,240.0 388.0,246.0 356.0,238.0 338.0,226.0 333.0,200.0" fill="#edf0ee" />
<polygon points="318.0,96.0 345.0,96.0 372.0,128.0 392.0,146.0 386.0,152.0 356.0,138.0 332.0,116.0" fill="#eef1ef" />
<polygon points="186.0,500.0 230.0,470.0 262.0,480.0 258.0,520.0 215.0,528.0 188.0,520.0" fill="#eef1ef" />
<polygon points="410.0,440.0 440.0,436.0 444.0,458.0 414.0,462.0" fill="#f0f2f1" />
<polygon points="700.0,96.0 760.0,96.0 735.0,112.0 705.0,110.0" fill="#f1f3f2" />
<polygon points="780.0,150.0 800.0,145.0 806.0,160.0 788.0,168.0" fill="#f0f3f0" />
<polygon points="860.0,150.0 880.0,142.0 890.0,160.0 872.0,170.0" fill="#f0f3f0" />
<polygon points="600.0,340.0 640.0,350.0 700.0,372.0 735.0,392.0 730.0,404.0 690.0,392.0 640.0,388.0 612.0,370.0" fill="#f1f3f2" />
</g>
<g filter="url(#wb)">
<polygon points="776.4,96.0 775.2,101.6 764.0,106.1 746.0,109.5 728.0,118.5 712.2,126.4 694.2,139.9 683.0,154.5 674.0,172.5 669.8,180.0 666.2,190.8 660.8,203.4 659.9,208.8 653.6,212.4 642.8,219.6 632.0,225.0 619.4,232.2 608.6,230.4 596.0,235.8 578.0,241.2 560.0,252.0 543.0,258.5 527.2,269.7 516.0,281.0 509.2,294.5 505.9,305.7 503.6,326.0 502.0,350.0 505.7,375.0 511.4,393.0 512.5,406.5 515.9,429.0 519.0,438.0 516.0,458.0 507.0,462.0 500.0,465.0 500.0,472.0 507.0,474.0 507.0,480.7 495.7,486.4 471.0,487.5 444.0,489.7 426.0,489.7 401.2,494.2 387.7,496.5 376.5,496.5 367.5,503.2 356.2,516.7 340.5,528.0 327.0,537.0 313.5,546.0 300.0,555.0 286.7,565.0 283.0,568.0 356.0,568.0 365.0,557.0 385.5,552.7 392.0,541.5 396.7,532.5 408.0,525.7 421.5,519.0 439.5,516.7 457.4,519.0 480.0,519.0 495.7,514.5 511.4,507.7 513.7,498.7 525.0,494.0 527.0,485.0 531.7,465.0 534.0,442.5 538.4,424.5 536.1,406.5 530.5,388.5 524.9,370.5 522.6,348.0 525.0,326.0 527.2,305.7 529.5,296.7 538.5,290.0 547.5,286.7 558.0,289.0 565.5,295.0 570.0,301.2 574.5,299.0 578.0,288.0 592.4,280.8 605.0,270.0 621.2,255.6 628.4,261.0 639.2,259.2 644.6,261.0 651.8,264.6 659.0,257.4 650.0,252.0 643.7,241.2 657.2,234.0 668.0,226.8 675.2,219.6 684.2,217.8 687.5,204.0 692.0,197.0 702.5,196.0 710.0,192.5 725.0,187.5 733.0,181.5 729.5,179.5 717.5,183.0 705.5,185.0 693.0,189.0 696.5,179.2 701.0,165.7 710.0,152.2 721.2,139.9 741.5,133.1 752.7,137.6 764.0,129.7 786.5,125.2 791.0,118.5 800.0,111.7 811.2,105.0 815.7,96.0" fill="#d1d7da" stroke="#d1d7da" stroke-width="1" stroke-linejoin="round"/>
<polygon points="557.6,276.0 560.0,270.5 574.5,263.0 597.0,254.0 617.2,248.4 606.0,258.5 588.0,272.0 576.7,281.0 563.0,281.5" fill="#f9f9f9" />
<polygon points="378.0,478.0 383.0,473.0 404.0,468.5 426.0,465.0 426.0,471.5 417.0,478.5 406.0,478.5 403.5,474.5 391.0,477.0 387.5,481.0 387.5,497.0 378.0,498.0" fill="#d1d7da" />
<polyline points="318.0,96.0 334.8,112.4 354.0,131.6 361.2,137.6" fill="none" stroke="#dde1e3" stroke-width="2.2" stroke-linejoin="round" stroke-linecap="round" />
<polyline points="361.2,137.6 373.2,140.0 390.0,146.0" fill="none" stroke="#dbe0e2" stroke-width="3.2" stroke-linejoin="round" stroke-linecap="round" />
<polyline points="390.0,146.0 393.5,150.8 392.8,165.2 387.6,179.5 378.0,191.5" fill="none" stroke="#d9dee0" stroke-width="4.6" stroke-linejoin="round" stroke-linecap="round" />
<polyline points="378.0,191.5 368.4,203.5 364.8,213.1 368.4,222.7 378.0,232.3 387.6,239.5" fill="none" stroke="#d7dcdf" stroke-width="6.6" stroke-linejoin="round" stroke-linecap="round" />
<polyline points="387.6,239.5 392.4,249.1 397.9,256.0" fill="none" stroke="#d9dee0" stroke-width="5.0" stroke-linejoin="round" stroke-linecap="round" />
<ellipse cx="386.5" cy="211" rx="4.2" ry="7.5" fill="#dde1e3" transform="rotate(-12 386.5 211)"/>
<polyline points="397.9,256.0 404.0,266.0 411.0,276.0 416.0,288.0 417.0,298.0 414.0,310.0 404.0,317.0 388.0,321.0 372.0,326.0 362.7,335.0" fill="none" stroke="#dde1e3" stroke-width="3.0" stroke-linejoin="round" stroke-linecap="round" />
<polyline points="362.7,335.0 362.0,350.0 356.0,360.5 348.5,371.0 345.5,381.5 347.7,389.0 354.4,393.5 365.0,394.2 370.2,396.5 371.0,401.0 366.4,410.0 362.0,419.0 356.0,423.4 344.0,425.0 338.7,428.0 338.5,436.0" fill="none" stroke="#d8dddf" stroke-width="3.9" stroke-linejoin="round" stroke-linecap="round" />
<polyline points="338.5,436.0 339.4,447.0 345.0,460.5 356.2,469.5 367.5,474.0 376.5,476.2 381.0,481.0 383.0,497.0" fill="none" stroke="#d4dadc" stroke-width="5.4" stroke-linejoin="round" stroke-linecap="round" />
<polyline points="570.0,301.0 574.0,315.0 580.0,330.0 592.0,344.0 606.0,352.0 612.0,358.0 621.0,366.0 624.0,376.0" fill="none" stroke="#dadfe1" stroke-width="2.2" stroke-linejoin="round" stroke-linecap="round" />
<polyline points="624.0,377.0 640.0,381.0 660.6,384.4 678.0,385.5" fill="none" stroke="#dde1e3" stroke-width="5.2" stroke-linejoin="round" stroke-linecap="round" />
<polyline points="678.0,385.5 692.7,386.4 712.8,396.5 729.0,404.5" fill="none" stroke="#dadfe1" stroke-width="3.6" stroke-linejoin="round" stroke-linecap="round" />
<polyline points="729.0,404.5 745.0,408.0 760.0,404.0 775.0,410.0" fill="none" stroke="#e0e4e5" stroke-width="1.6" stroke-linejoin="round" stroke-linecap="round" />
<ellipse cx="621.5" cy="369" rx="3.2" ry="6.5" fill="#d8dddf"/>
<ellipse cx="611.5" cy="355" rx="2.6" ry="4.2" fill="#dadfe1"/>
<polyline points="536.0,440.0 552.0,436.0 566.0,442.0 580.0,447.0 592.0,450.0 604.3,444.7 620.4,436.7 640.5,428.6 656.6,432.6 668.0,440.0" fill="none" stroke="#dce0e2" stroke-width="2.6" stroke-linejoin="round" stroke-linecap="round" />
<polyline points="560.0,462.0 575.0,470.0 590.0,468.0 604.0,476.0 616.0,486.0" fill="none" stroke="#e0e3e5" stroke-width="1.8" stroke-linejoin="round" stroke-linecap="round" />
<polyline points="512.0,505.0 525.0,515.0 538.0,523.0 547.0,534.0 553.0,550.0 556.0,568.0" fill="none" stroke="#d5dbdd" stroke-width="6.0" stroke-linejoin="round" stroke-linecap="round" />
<polyline points="547.0,534.0 565.0,540.0 580.0,552.0 590.0,568.0" fill="none" stroke="#dfe3e4" stroke-width="1.6" stroke-linejoin="round" stroke-linecap="round" />
<polyline points="731.0,181.0 744.0,190.0 756.0,198.0 768.0,206.0 780.0,215.0 788.0,226.0 794.0,236.0 801.0,247.0 808.0,257.0 815.0,265.0 822.0,271.0 829.0,282.0 836.0,292.0 842.0,305.0 850.0,318.0" fill="none" stroke="#dde1e3" stroke-width="1.3" stroke-linejoin="round" stroke-linecap="round" />
<polyline points="850.0,318.0 870.0,312.0 890.0,300.0 905.0,290.0" fill="none" stroke="#e0e4e5" stroke-width="1.6" stroke-linejoin="round" stroke-linecap="round" />
<polygon points="236.8,466.0 241.0,478.0 244.8,488.8 252.9,506.0 246.0,516.0 238.0,520.0 232.8,508.8 237.0,499.0 235.0,486.0" fill="#dee2e3" />
<polygon points="122.0,531.0 134.0,525.0 146.0,523.0 148.0,537.0 140.0,546.0 126.0,549.0" fill="#e3e6e7" />
<polygon points="152.5,519.0 170.0,514.0 190.0,513.0 197.0,519.0 180.0,524.0 158.0,526.0" fill="#e4e7e8" />
<polyline points="262.0,415.0 258.0,432.0 250.0,446.0 244.0,458.0 238.0,468.0" fill="none" stroke="#e0e3e5" stroke-width="1.3" stroke-linejoin="round" stroke-linecap="round" />
<polyline points="146.0,535.0 170.0,532.0 200.0,528.0 230.0,524.0 246.0,516.0" fill="none" stroke="#dfe3e4" stroke-width="1.6" stroke-linejoin="round" stroke-linecap="round" />
<polyline points="200.0,530.0 205.0,540.0 198.0,552.0" fill="none" stroke="#dfe3e4" stroke-width="1.5" stroke-linejoin="round" stroke-linecap="round" />
<polygon points="36.0,480.0 40.0,480.0 42.0,500.0 36.0,504.0" fill="#e6e8e9" />
<polygon points="98.0,545.0 110.0,540.0 114.0,556.0 104.0,568.0 96.0,568.0" fill="#e4e7e8" />
<polyline points="618.0,232.0 612.0,215.0 620.0,200.0 615.0,185.0 604.0,170.0 596.0,150.0" fill="none" stroke="#e2e5e6" stroke-width="1.2" stroke-linejoin="round" stroke-linecap="round" />
</g>
<g filter="url(#rb)"><g fill="none" stroke="#eef0f0" stroke-width="1.9" stroke-linejoin="round" stroke-linecap="round">
<polyline points="80.0,372.0 100.0,420.5 124.0,468.7 144.0,508.8"/>
<polyline points="215.6,335.0 218.0,353.0 222.8,368.6 230.0,383.0 234.8,391.4 232.4,415.0 236.0,440.0"/>
<polyline points="170.0,362.6 185.6,353.0 215.6,345.8 237.2,339.8"/>
<polyline points="234.8,391.4 254.0,380.6 269.6,374.6 290.0,359.0 310.0,345.0"/>
<polyline points="261.2,350.6 269.6,371.0 272.0,389.0 269.6,415.0 262.0,440.0"/>
<polyline points="60.0,300.0 70.0,340.0 84.0,380.0 90.0,420.0 86.0,470.0"/>
<polyline points="120.0,300.0 128.0,330.0 150.0,372.0 168.0,400.0 176.5,432.5"/>
<polyline points="36.0,384.0 70.0,372.0 110.0,356.0 150.0,340.0 196.0,322.0"/>
<polyline points="60.0,470.0 100.0,440.0 140.0,420.0 187.0,396.0"/>
<polyline points="300.0,372.0 320.0,360.0 345.0,345.0 370.0,336.0"/>
<polyline points="300.0,330.0 312.0,352.0 318.0,380.0 314.0,410.0 312.0,440.0"/>
<polyline points="330.0,250.0 338.0,280.0 342.0,310.0 340.0,340.0"/>
<polyline points="295.0,240.0 330.0,250.0 370.0,258.0 400.0,262.0"/>
<polyline points="290.0,200.0 300.0,230.0 306.0,262.0 310.0,300.0"/>
<polyline points="36.0,292.0 88.6,306.0 141.0,320.0 176.0,330.0 230.0,350.0"/>
<polyline points="106.0,261.0 151.7,292.0 183.0,320.0 215.0,345.0"/>
<polyline points="204.0,264.0 232.0,292.0 260.0,306.0 288.0,320.0"/>
<polyline points="106.0,96.0 141.0,113.5 204.0,120.5 246.0,113.5 281.0,117.0 316.0,103.0"/>
<polyline points="36.0,180.0 70.0,215.0 110.0,262.0"/>
<polyline points="36.0,130.0 60.0,120.0 90.0,100.0"/>
<polyline points="150.0,96.0 180.0,130.0 204.0,160.0"/>
<polyline points="200.0,300.0 210.0,340.0 230.0,380.0 250.0,420.0 262.0,450.0"/>
<polyline points="140.0,316.0 160.0,360.0 186.0,400.0 200.0,440.0"/>
<polyline points="380.0,262.0 420.0,264.0 470.0,266.0 510.0,270.0"/>
<polyline points="400.0,215.0 450.0,218.0 500.0,222.0 540.0,228.0"/>
<polyline points="395.0,190.0 450.0,193.0 500.0,197.0 560.0,203.0"/>
<polyline points="420.0,160.0 470.0,165.0 520.0,170.0 580.0,178.0"/>
<polyline points="410.0,240.0 460.0,243.0 505.0,247.0"/>
<polyline points="400.0,340.0 450.0,343.0 500.0,346.0"/>
<polyline points="395.0,370.0 450.0,373.0 505.0,376.0"/>
<polyline points="400.0,400.0 450.0,403.0 510.0,406.0"/>
<polyline points="430.0,170.0 425.0,230.0 418.0,290.0 412.0,350.0 408.0,420.0"/>
<polyline points="510.0,130.0 505.0,180.0 498.0,240.0 492.0,300.0 486.0,360.0 482.0,420.0"/>
<polyline points="540.0,140.0 532.0,190.0 524.0,240.0"/>
<polyline points="515.0,270.0 545.0,245.0 580.0,225.0 610.0,205.0 640.0,185.0"/>
<polyline points="560.0,96.0 575.0,140.0 590.0,195.0"/>
<polyline points="600.0,96.0 615.0,140.0 625.0,172.0"/>
<polyline points="763.0,240.0 756.0,292.5 749.0,330.0 745.0,360.0"/>
<polyline points="550.0,332.0 600.0,380.0 650.0,430.0 700.0,480.0 740.0,520.0 780.0,568.0"/>
<polyline points="822.0,112.0 835.0,140.0 850.5,159.0"/>
<polyline points="880.0,96.0 905.0,130.0 946.0,190.0"/>
<polyline points="780.0,212.0 820.0,250.0 870.0,290.0 946.0,345.0"/>
<polyline points="700.0,300.0 760.0,292.0 830.0,270.0 900.0,240.0 946.0,225.0"/>
<polyline points="850.0,330.0 870.0,300.0 900.0,260.0 946.0,205.0"/>
<polyline points="660.0,420.0 720.0,440.0 790.0,470.0 860.0,500.0 946.0,520.0"/>
<polyline points="700.0,520.0 780.0,500.0 860.0,470.0 946.0,430.0"/>
<polyline points="640.0,306.0 690.0,300.0 745.0,300.0"/>
</g>
<g fill="none" stroke="#eaecec" stroke-width="2.4" stroke-linejoin="round" stroke-linecap="round">
<polyline points="36.0,416.5 96.0,400.0 156.5,380.0 216.7,360.0 277.0,344.0 340.0,324.0 400.0,308.0"/>
<polyline points="36.0,344.0 76.0,332.0 136.0,316.0 196.6,300.0 246.0,285.0 300.0,290.0 340.0,292.0 410.0,296.0 440.0,300.0 470.0,303.0 503.0,306.0"/>
<polyline points="36.0,525.0 76.0,500.8 124.0,464.6 176.5,432.5 216.7,412.4 261.0,392.4 300.0,372.0"/>
<polyline points="36.0,549.0 76.0,533.0 128.0,500.8 168.5,476.7 204.7,460.6 244.8,448.6 277.0,420.5 293.0,380.0 317.0,340.0 345.0,310.0"/>
<polyline points="204.0,198.0 246.0,166.0 281.0,145.0 309.5,152.0 340.0,141.6 380.0,150.0"/>
<polyline points="204.0,218.7 253.4,201.0 302.5,166.0 340.0,148.6"/>
<polyline points="204.0,131.0 232.0,152.0 260.4,183.7 278.0,208.0 274.4,236.0 278.0,264.0 281.4,292.0 288.5,330.0"/>
<polyline points="36.0,264.0 106.0,271.0 176.0,275.0 246.0,285.0"/>
<polyline points="483.0,96.0 480.0,142.0 473.8,203.0 467.7,249.0 461.5,300.0 455.0,360.0 450.0,420.0 447.0,470.0"/>
<polyline points="505.0,262.0 530.0,240.0 560.0,215.0 590.0,195.0 620.0,175.0 650.0,150.0 680.0,120.0 700.0,96.0"/>
<polyline points="584.0,336.0 660.6,344.0 741.0,340.0 789.0,336.0 849.5,328.0 946.0,316.0"/>
<polyline points="640.0,345.0 660.6,360.3 721.0,396.5 789.0,416.6 845.5,432.6 946.0,452.7"/>
<polyline points="745.0,300.0 741.0,360.0 737.0,400.5 745.0,452.7 757.0,480.9 789.0,513.0 821.3,549.0 835.0,568.0"/>
<polyline points="560.0,312.0 585.0,345.0 608.3,380.4 640.5,432.6 672.6,476.8 704.8,517.0 729.0,557.0 735.0,568.0"/>
<polyline points="555.0,318.0 564.0,340.0 580.0,388.4 604.3,452.7 620.4,501.0 636.5,557.0 640.0,568.0"/>
</g>
<g fill="none" stroke="#e6e8e9" stroke-width="3.2" stroke-linejoin="round" stroke-linecap="round">
<polyline points="48.0,300.0 44.0,340.0 50.0,380.0 40.0,420.0 36.0,460.0"/>
<polyline points="36.0,561.0 96.0,541.0 144.4,525.0 196.6,521.0 257.0,521.0 293.0,488.8 317.0,476.7 340.0,468.7 375.0,455.0 420.0,452.0 470.0,450.0 500.0,440.0 519.0,438.0 535.0,440.0 560.0,445.0 600.0,450.0"/>
<polyline points="400.4,154.0 452.4,126.6 501.3,108.2 544.0,96.0"/>
<polyline points="519.0,438.0 508.0,400.0 502.0,370.0 496.0,330.0 497.0,300.0 508.0,273.0 536.0,248.0 576.0,227.0 616.0,209.0 650.0,190.0 676.0,150.0 706.0,116.0 740.0,96.0"/>
<polyline points="405.0,301.0 460.0,304.5 505.9,305.7 527.2,305.7 560.0,312.0 600.0,330.0 640.0,345.0 700.0,360.0"/>
<polyline points="946.0,106.5 850.5,159.0 780.0,212.0 738.0,243.0 675.0,285.5 640.0,306.5 610.0,330.0 590.0,370.0 580.0,420.0 570.0,470.0 560.0,520.0 555.0,568.0"/>
<polyline points="713.7,127.6 738.0,176.7 780.0,222.0 808.0,264.0 836.5,299.5 852.7,328.0 870.0,372.0 893.0,420.0 920.0,480.0 946.0,530.0"/>
<polyline points="661.0,206.0 671.6,212.0 710.0,236.0 756.0,236.0 780.0,222.0"/>
<polyline points="946.0,312.0 880.9,348.2 868.8,368.3 856.8,392.4 848.7,420.6 836.7,452.7 812.5,484.9 788.4,513.0 752.3,537.1 700.0,553.2 640.0,562.0 600.0,568.0"/>
<polyline points="946.0,340.0 909.0,368.0 876.8,400.5 856.0,432.0 840.0,470.0 815.0,505.0 780.0,540.0 757.0,568.0"/>
<polyline points="535.0,440.0 545.0,480.0 560.0,520.0 580.0,568.0"/>
</g>
<g fill="none" stroke="#fcfcfc" stroke-width="1.2" stroke-linejoin="round" stroke-linecap="round">
<polyline points="48.0,300.0 44.0,340.0 50.0,380.0 40.0,420.0 36.0,460.0"/>
<polyline points="36.0,561.0 96.0,541.0 144.4,525.0 196.6,521.0 257.0,521.0 293.0,488.8 317.0,476.7 340.0,468.7 375.0,455.0 420.0,452.0 470.0,450.0 500.0,440.0 519.0,438.0 535.0,440.0 560.0,445.0 600.0,450.0"/>
<polyline points="400.4,154.0 452.4,126.6 501.3,108.2 544.0,96.0"/>
<polyline points="519.0,438.0 508.0,400.0 502.0,370.0 496.0,330.0 497.0,300.0 508.0,273.0 536.0,248.0 576.0,227.0 616.0,209.0 650.0,190.0 676.0,150.0 706.0,116.0 740.0,96.0"/>
<polyline points="405.0,301.0 460.0,304.5 505.9,305.7 527.2,305.7 560.0,312.0 600.0,330.0 640.0,345.0 700.0,360.0"/>
<polyline points="946.0,106.5 850.5,159.0 780.0,212.0 738.0,243.0 675.0,285.5 640.0,306.5 610.0,330.0 590.0,370.0 580.0,420.0 570.0,470.0 560.0,520.0 555.0,568.0"/>
<polyline points="713.7,127.6 738.0,176.7 780.0,222.0 808.0,264.0 836.5,299.5 852.7,328.0 870.0,372.0 893.0,420.0 920.0,480.0 946.0,530.0"/>
<polyline points="661.0,206.0 671.6,212.0 710.0,236.0 756.0,236.0 780.0,222.0"/>
<polyline points="946.0,312.0 880.9,348.2 868.8,368.3 856.8,392.4 848.7,420.6 836.7,452.7 812.5,484.9 788.4,513.0 752.3,537.1 700.0,553.2 640.0,562.0 600.0,568.0"/>
<polyline points="946.0,340.0 909.0,368.0 876.8,400.5 856.0,432.0 840.0,470.0 815.0,505.0 780.0,540.0 757.0,568.0"/>
<polyline points="535.0,440.0 545.0,480.0 560.0,520.0 580.0,568.0"/>
</g></g>
</svg>
</div>
<svg width="910" height="472" viewBox="36 96 910 472" style="position:absolute;left:36px;top:96px">
<defs><filter id="db" x="-2%" y="-2%" width="104%" height="104%"><feGaussianBlur stdDeviation="0.45"/></filter></defs>
<g filter="url(#db)" stroke="#fff" stroke-opacity=".5" stroke-width=".8" fill-opacity=".84"><circle cx="420.7" cy="178.0" r="2.35" fill="#c4405f"/><circle cx="430.3" cy="179.5" r="2.35" fill="#c4405f"/><circle cx="438.4" cy="179.5" r="2.35" fill="#78b3bf"/><circle cx="447.2" cy="181.5" r="2.35" fill="#78b3bf"/><circle cx="469.7" cy="179.2" r="2.35" fill="#78b3bf"/><circle cx="488.7" cy="179.7" r="2.35" fill="#c4405f"/><circle cx="506.1" cy="180.0" r="2.35" fill="#6aaedb"/><circle cx="505.5" cy="182.7" r="2.35" fill="#6aaedb"/><circle cx="476.1" cy="189.7" r="2.35" fill="#c4405f"/><circle cx="486.9" cy="186.0" r="2.35" fill="#6aaedb"/><circle cx="486.6" cy="188.7" r="2.35" fill="#6aaedb"/><circle cx="495.3" cy="187.9" r="2.35" fill="#78b3bf"/><circle cx="505.4" cy="189.0" r="2.35" fill="#6aaedb"/><circle cx="505.8" cy="192.0" r="2.35" fill="#6aaedb"/><circle cx="510.9" cy="192.7" r="2.35" fill="#6aaedb"/><circle cx="511.7" cy="195.7" r="2.35" fill="#6aaedb"/><circle cx="514.7" cy="190.8" r="2.35" fill="#c4405f"/><circle cx="518.4" cy="193.0" r="2.35" fill="#78b3bf"/><circle cx="524.1" cy="194.2" r="2.35" fill="#c4405f"/><circle cx="503.4" cy="200.2" r="2.35" fill="#78b3bf"/><circle cx="523.2" cy="202.5" r="2.35" fill="#c4405f"/><circle cx="417.2" cy="192.0" r="2.35" fill="#78b3bf"/><circle cx="422.5" cy="195.0" r="2.35" fill="#78b3bf"/><circle cx="427.7" cy="195.0" r="2.35" fill="#78b3bf"/><circle cx="414.5" cy="204.7" r="2.35" fill="#c4405f"/><circle cx="469.2" cy="201.7" r="2.35" fill="#6aaedb"/><circle cx="469.2" cy="205.5" r="2.35" fill="#6aaedb"/><circle cx="469.7" cy="208.8" r="2.35" fill="#6aaedb"/><circle cx="428.5" cy="218.2" r="2.35" fill="#78b3bf"/><circle cx="436.4" cy="225.7" r="2.35" fill="#78b3bf"/><circle cx="485.1" cy="221.7" r="2.35" fill="#c4405f"/><circle cx="521.4" cy="213.0" r="2.35" fill="#c4405f"/><circle cx="519.9" cy="217.5" r="2.35" fill="#6aaedb"/><circle cx="518.4" cy="221.2" r="2.35" fill="#6aaedb"/><circle cx="523.7" cy="221.7" r="2.35" fill="#c4405f"/><circle cx="465.2" cy="234.7" r="2.35" fill="#8c93a4"/><circle cx="466.8" cy="236.0" r="2.35" fill="#8c93a4"/><circle cx="488.9" cy="234.0" r="2.35" fill="#8c93a4"/><circle cx="522.2" cy="234.2" r="2.35" fill="#c4405f"/><circle cx="411.5" cy="242.5" r="2.35" fill="#78b3bf"/><circle cx="418.3" cy="242.2" r="2.35" fill="#78b3bf"/><circle cx="435.5" cy="247.9" r="2.35" fill="#78b3bf"/><circle cx="424.0" cy="252.0" r="2.35" fill="#6aaedb"/><circle cx="422.5" cy="254.2" r="2.35" fill="#6aaedb"/><circle cx="434.2" cy="255.7" r="2.35" fill="#78b3bf"/><circle cx="416.2" cy="258.2" r="2.35" fill="#78b3bf"/><circle cx="422.5" cy="262.4" r="2.35" fill="#6aaedb"/><circle cx="438.2" cy="263.2" r="2.35" fill="#6aaedb"/><circle cx="451.0" cy="251.6" r="2.35" fill="#78b3bf"/><circle cx="460.7" cy="250.4" r="2.35" fill="#6aaedb"/><circle cx="460.7" cy="253.4" r="2.35" fill="#6aaedb"/><circle cx="469.2" cy="250.7" r="2.35" fill="#6aaedb"/><circle cx="469.4" cy="253.0" r="2.35" fill="#6aaedb"/><circle cx="460.0" cy="259.4" r="2.35" fill="#6aaedb"/><circle cx="471.6" cy="259.7" r="2.35" fill="#78b3bf"/><circle cx="480.5" cy="251.6" r="2.35" fill="#6aaedb"/><circle cx="486.2" cy="254.2" r="2.35" fill="#c4405f"/><circle cx="491.1" cy="254.2" r="2.35" fill="#6aaedb"/><circle cx="494.4" cy="253.1" r="2.35" fill="#6aaedb"/><circle cx="502.8" cy="256.0" r="2.35" fill="#c4405f"/><circle cx="505.7" cy="261.7" r="2.35" fill="#6aaedb"/><circle cx="522.9" cy="254.6" r="2.35" fill="#c4405f"/><circle cx="459.7" cy="262.7" r="2.35" fill="#6aaedb"/><circle cx="519.2" cy="266.3" r="2.35" fill="#c2cc62"/><circle cx="440.8" cy="269.7" r="2.35" fill="#c4405f"/><circle cx="431.0" cy="273.9" r="2.35" fill="#6aaedb"/><circle cx="434.2" cy="278.0" r="2.35" fill="#6aaedb"/><circle cx="504.5" cy="273.5" r="2.35" fill="#6aaedb"/><circle cx="494.4" cy="279.2" r="2.35" fill="#6aaedb"/><circle cx="489.9" cy="282.5" r="2.35" fill="#6aaedb"/><circle cx="491.4" cy="284.7" r="2.35" fill="#6aaedb"/><circle cx="458.9" cy="283.2" r="2.35" fill="#8c93a4"/><circle cx="463.7" cy="286.2" r="2.35" fill="#8c93a4"/><circle cx="400.7" cy="288.5" r="2.35" fill="#6aaedb"/><circle cx="455.5" cy="290.7" r="2.35" fill="#c4405f"/><circle cx="446.0" cy="294.2" r="2.35" fill="#c4405f"/><circle cx="473.4" cy="294.8" r="2.35" fill="#c4405f"/><circle cx="435.7" cy="297.2" r="2.35" fill="#6aaedb"/><circle cx="411.5" cy="300.2" r="2.35" fill="#6aaedb"/><circle cx="469.7" cy="300.5" r="2.35" fill="#c4405f"/><circle cx="443.5" cy="297.5" r="2.35" fill="#6aaedb"/><circle cx="420.2" cy="307.7" r="2.35" fill="#c4405f"/><circle cx="439.7" cy="305.0" r="2.35" fill="#c4405f"/><circle cx="451.0" cy="310.2" r="2.35" fill="#6aaedb"/><circle cx="453.2" cy="308.0" r="2.35" fill="#6aaedb"/><circle cx="449.5" cy="312.5" r="2.35" fill="#6aaedb"/><circle cx="460.0" cy="311.0" r="2.35" fill="#6aaedb"/><circle cx="462.2" cy="313.2" r="2.35" fill="#6aaedb"/><circle cx="463.7" cy="315.5" r="2.35" fill="#6aaedb"/><circle cx="468.2" cy="315.5" r="2.35" fill="#6aaedb"/><circle cx="476.4" cy="313.2" r="2.35" fill="#c2cc62"/><circle cx="494.4" cy="311.0" r="2.35" fill="#6aaedb"/><circle cx="489.9" cy="309.5" r="2.35" fill="#6aaedb"/><circle cx="433.7" cy="316.7" r="2.35" fill="#78b3bf"/><circle cx="437.2" cy="318.2" r="2.35" fill="#c4405f"/><circle cx="440.8" cy="316.7" r="2.35" fill="#78b3bf"/><circle cx="447.2" cy="319.2" r="2.35" fill="#6aaedb"/><circle cx="457.0" cy="317.0" r="2.35" fill="#c4405f"/><circle cx="462.2" cy="317.7" r="2.35" fill="#6aaedb"/><circle cx="471.6" cy="319.7" r="2.35" fill="#c4405f"/><circle cx="469.7" cy="323.0" r="2.35" fill="#6aaedb"/><circle cx="470.4" cy="325.2" r="2.35" fill="#6aaedb"/><circle cx="483.2" cy="318.5" r="2.35" fill="#6aaedb"/><circle cx="480.9" cy="322.7" r="2.35" fill="#c4405f"/><circle cx="482.4" cy="327.2" r="2.35" fill="#6aaedb"/><circle cx="416.8" cy="325.7" r="2.35" fill="#6aaedb"/><circle cx="421.7" cy="325.7" r="2.35" fill="#6aaedb"/><circle cx="434.8" cy="327.5" r="2.35" fill="#78b3bf"/><circle cx="499.7" cy="328.2" r="2.35" fill="#8c93a4"/><circle cx="453.2" cy="330.5" r="2.35" fill="#c4405f"/><circle cx="450.2" cy="333.2" r="2.35" fill="#6aaedb"/><circle cx="462.2" cy="331.2" r="2.35" fill="#78b3bf"/><circle cx="481.7" cy="333.5" r="2.35" fill="#6aaedb"/><circle cx="494.0" cy="332.2" r="2.35" fill="#78b3bf"/><circle cx="427.0" cy="336.2" r="2.35" fill="#c4405f"/><circle cx="446.5" cy="338.7" r="2.35" fill="#6aaedb"/><circle cx="479.4" cy="339.5" r="2.35" fill="#6aaedb"/><circle cx="459.5" cy="342.2" r="2.35" fill="#c4405f"/><circle cx="467.0" cy="341.7" r="2.35" fill="#78b3bf"/><circle cx="469.7" cy="344.0" r="2.35" fill="#c4405f"/><circle cx="444.2" cy="344.7" r="2.35" fill="#6aaedb"/><circle cx="459.2" cy="347.7" r="2.35" fill="#78b3bf"/><circle cx="464.5" cy="351.2" r="2.35" fill="#c4405f"/><circle cx="466.7" cy="350.0" r="2.35" fill="#6aaedb"/><circle cx="490.7" cy="351.2" r="2.35" fill="#78b3bf"/><circle cx="473.4" cy="355.2" r="2.35" fill="#6aaedb"/><circle cx="477.6" cy="354.2" r="2.35" fill="#c4405f"/><circle cx="430.0" cy="354.5" r="2.35" fill="#78b3bf"/><circle cx="418.3" cy="356.7" r="2.35" fill="#c4405f"/><circle cx="489.9" cy="358.6" r="2.35" fill="#78b3bf"/><circle cx="453.8" cy="305.7" r="2.35" fill="#6aaedb"/><circle cx="452.0" cy="309.3" r="2.35" fill="#6aaedb"/><circle cx="448.4" cy="316.5" r="2.35" fill="#6aaedb"/><circle cx="446.6" cy="319.7" r="2.35" fill="#6aaedb"/><circle cx="460.1" cy="310.2" r="2.35" fill="#6aaedb"/><circle cx="462.8" cy="315.6" r="2.35" fill="#6aaedb"/><circle cx="462.4" cy="318.3" r="2.35" fill="#6aaedb"/><circle cx="475.4" cy="309.3" r="2.35" fill="#6aaedb"/><circle cx="488.0" cy="308.9" r="2.35" fill="#6aaedb"/><circle cx="491.6" cy="310.7" r="2.35" fill="#6aaedb"/><circle cx="495.2" cy="312.0" r="2.35" fill="#6aaedb"/><circle cx="491.6" cy="285.9" r="2.35" fill="#6aaedb"/><circle cx="434.9" cy="327.3" r="2.35" fill="#78b3bf"/><circle cx="443.2" cy="361.4" r="2.35" fill="#c4405f"/><circle cx="451.3" cy="365.2" r="2.35" fill="#c4405f"/><circle cx="459.5" cy="364.7" r="2.35" fill="#78b3bf"/><circle cx="469.7" cy="367.7" r="2.35" fill="#6aaedb"/><circle cx="479.7" cy="366.2" r="2.35" fill="#78b3bf"/><circle cx="494.1" cy="369.5" r="2.35" fill="#6aaedb"/><circle cx="440.9" cy="373.7" r="2.35" fill="#c4405f"/><circle cx="485.4" cy="378.2" r="2.35" fill="#c4405f"/><circle cx="415.3" cy="380.0" r="2.35" fill="#c4405f"/><circle cx="422.9" cy="382.3" r="2.35" fill="#c4405f"/><circle cx="433.7" cy="379.0" r="2.35" fill="#6aaedb"/><circle cx="433.7" cy="382.0" r="2.35" fill="#6aaedb"/><circle cx="438.7" cy="379.0" r="2.35" fill="#c4405f"/><circle cx="439.7" cy="383.5" r="2.35" fill="#6aaedb"/><circle cx="442.0" cy="381.7" r="2.35" fill="#6aaedb"/><circle cx="451.7" cy="382.3" r="2.35" fill="#6aaedb"/><circle cx="462.2" cy="385.7" r="2.35" fill="#78b3bf"/><circle cx="491.4" cy="384.5" r="2.35" fill="#78b3bf"/><circle cx="401.5" cy="391.4" r="2.35" fill="#6aaedb"/><circle cx="437.8" cy="391.7" r="2.35" fill="#78b3bf"/><circle cx="450.2" cy="392.5" r="2.35" fill="#c4405f"/><circle cx="466.7" cy="390.5" r="2.35" fill="#6aaedb"/><circle cx="463.0" cy="394.7" r="2.35" fill="#c4405f"/><circle cx="456.2" cy="398.5" r="2.35" fill="#6aaedb"/><circle cx="480.5" cy="391.0" r="2.35" fill="#6aaedb"/><circle cx="490.7" cy="393.7" r="2.35" fill="#78b3bf"/><circle cx="496.2" cy="393.7" r="2.35" fill="#78b3bf"/><circle cx="437.5" cy="397.7" r="2.35" fill="#6aaedb"/><circle cx="403.3" cy="402.2" r="2.35" fill="#c4405f"/><circle cx="417.2" cy="402.7" r="2.35" fill="#78b3bf"/><circle cx="429.2" cy="401.5" r="2.35" fill="#78b3bf"/><circle cx="437.5" cy="402.2" r="2.35" fill="#6aaedb"/><circle cx="430.7" cy="408.2" r="2.35" fill="#6aaedb"/><circle cx="451.7" cy="408.2" r="2.35" fill="#c4405f"/><circle cx="463.0" cy="403.7" r="2.35" fill="#c4405f"/><circle cx="474.5" cy="407.0" r="2.35" fill="#78b3bf"/><circle cx="470.7" cy="416.5" r="2.35" fill="#78b3bf"/><circle cx="488.7" cy="417.5" r="2.35" fill="#8c93a4"/><circle cx="428.2" cy="421.0" r="2.35" fill="#c4405f"/><circle cx="430.7" cy="428.2" r="2.35" fill="#78b3bf"/><circle cx="404.0" cy="429.5" r="2.35" fill="#c4405f"/><circle cx="316.2" cy="248.7" r="2.35" fill="#8c93a4"/><circle cx="411.4" cy="242.2" r="2.35" fill="#6aaedb"/><circle cx="414.4" cy="258.7" r="2.35" fill="#6aaedb"/><circle cx="316.2" cy="267.3" r="2.35" fill="#6aaedb"/><circle cx="320.0" cy="268.5" r="2.35" fill="#6aaedb"/><circle cx="360.0" cy="266.2" r="2.35" fill="#c4405f"/><circle cx="349.2" cy="274.2" r="2.35" fill="#78b3bf"/><circle cx="366.9" cy="273.3" r="2.35" fill="#78b3bf"/><circle cx="318.9" cy="280.5" r="2.35" fill="#c4405f"/><circle cx="333.0" cy="283.9" r="2.35" fill="#8c93a4"/><circle cx="377.4" cy="282.0" r="2.35" fill="#6aaedb"/><circle cx="376.2" cy="287.2" r="2.35" fill="#6aaedb"/><circle cx="341.0" cy="289.8" r="2.35" fill="#c4405f"/><circle cx="346.2" cy="288.3" r="2.35" fill="#6aaedb"/><circle cx="354.4" cy="292.2" r="2.35" fill="#c4405f"/><circle cx="363.9" cy="289.2" r="2.35" fill="#6aaedb"/><circle cx="366.4" cy="291.7" r="2.35" fill="#6aaedb"/><circle cx="369.4" cy="288.3" r="2.35" fill="#c4405f"/><circle cx="373.9" cy="291.7" r="2.35" fill="#6aaedb"/><circle cx="379.9" cy="291.7" r="2.35" fill="#6aaedb"/><circle cx="387.4" cy="293.2" r="2.35" fill="#6aaedb"/><circle cx="391.2" cy="293.7" r="2.35" fill="#6aaedb"/><circle cx="399.9" cy="288.7" r="2.35" fill="#6aaedb"/><circle cx="317.3" cy="291.0" r="2.35" fill="#6aaedb"/><circle cx="317.7" cy="296.7" r="2.35" fill="#6aaedb"/><circle cx="320.7" cy="299.2" r="2.35" fill="#6aaedb"/><circle cx="356.7" cy="296.7" r="2.35" fill="#78b3bf"/><circle cx="352.6" cy="300.4" r="2.35" fill="#8c93a4"/><circle cx="370.5" cy="299.2" r="2.35" fill="#78b3bf"/><circle cx="389.2" cy="302.2" r="2.35" fill="#c4405f"/><circle cx="411.4" cy="300.0" r="2.35" fill="#6aaedb"/><circle cx="311.3" cy="307.4" r="2.35" fill="#c4405f"/><circle cx="315.8" cy="309.0" r="2.35" fill="#78b3bf"/><circle cx="389.7" cy="311.6" r="2.35" fill="#78b3bf"/><circle cx="343.2" cy="313.9" r="2.35" fill="#6aaedb"/><circle cx="310.5" cy="318.7" r="2.35" fill="#6aaedb"/><circle cx="322.2" cy="317.9" r="2.35" fill="#6aaedb"/><circle cx="328.2" cy="317.9" r="2.35" fill="#6aaedb"/><circle cx="354.1" cy="320.2" r="2.35" fill="#6aaedb"/><circle cx="384.7" cy="321.7" r="2.35" fill="#6aaedb"/><circle cx="346.2" cy="335.9" r="2.35" fill="#8c93a4"/><circle cx="323.0" cy="339.7" r="2.35" fill="#6aaedb"/><circle cx="388.2" cy="338.9" r="2.35" fill="#78b3bf"/><circle cx="311.0" cy="351.2" r="2.35" fill="#c4405f"/><circle cx="328.2" cy="353.0" r="2.35" fill="#c4405f"/><circle cx="310.7" cy="369.5" r="2.35" fill="#78b3bf"/><circle cx="385.2" cy="351.2" r="2.35" fill="#6aaedb"/><circle cx="384.1" cy="366.2" r="2.35" fill="#6aaedb"/><circle cx="390.9" cy="372.2" r="2.35" fill="#c4405f"/><circle cx="398.2" cy="378.2" r="2.35" fill="#78b3bf"/><circle cx="414.4" cy="379.7" r="2.35" fill="#c4405f"/><circle cx="401.2" cy="391.5" r="2.35" fill="#6aaedb"/><circle cx="402.9" cy="401.7" r="2.35" fill="#c4405f"/><circle cx="312.0" cy="420.4" r="2.35" fill="#6aaedb"/><circle cx="315.2" cy="192.7" r="2.35" fill="#78b3bf"/><circle cx="337.2" cy="196.4" r="2.35" fill="#78b3bf"/><circle cx="540.5" cy="176.2" r="2.35" fill="#8c93a4"/><circle cx="543.2" cy="176.2" r="2.35" fill="#8c93a4"/><circle cx="554.0" cy="177.7" r="2.35" fill="#6aaedb"/><circle cx="560.0" cy="177.7" r="2.35" fill="#c4405f"/><circle cx="563.0" cy="178.5" r="2.35" fill="#c4405f"/><circle cx="565.2" cy="177.0" r="2.35" fill="#8c93a4"/><circle cx="555.5" cy="183.7" r="2.35" fill="#6aaedb"/><circle cx="554.0" cy="186.0" r="2.35" fill="#6aaedb"/><circle cx="548.3" cy="187.8" r="2.35" fill="#78b3bf"/><circle cx="569.7" cy="188.2" r="2.35" fill="#6aaedb"/><circle cx="566.0" cy="192.0" r="2.35" fill="#6aaedb"/><circle cx="595.5" cy="187.8" r="2.35" fill="#6aaedb"/><circle cx="600.4" cy="187.8" r="2.35" fill="#8c93a4"/><circle cx="615.1" cy="193.8" r="2.35" fill="#6aaedb"/><circle cx="515.7" cy="190.8" r="2.35" fill="#c4405f"/><circle cx="524.7" cy="193.8" r="2.35" fill="#c4405f"/><circle cx="529.2" cy="195.0" r="2.35" fill="#78b3bf"/><circle cx="574.7" cy="197.7" r="2.35" fill="#c4405f"/><circle cx="589.5" cy="198.0" r="2.35" fill="#6aaedb"/><circle cx="579.4" cy="201.7" r="2.35" fill="#8c93a4"/><circle cx="604.6" cy="202.8" r="2.35" fill="#8c93a4"/><circle cx="530.7" cy="202.5" r="2.35" fill="#78b3bf"/><circle cx="524.3" cy="205.8" r="2.35" fill="#78b3bf"/><circle cx="533.0" cy="208.5" r="2.35" fill="#78b3bf"/><circle cx="582.0" cy="208.2" r="2.35" fill="#6aaedb"/><circle cx="591.0" cy="207.7" r="2.35" fill="#c4405f"/><circle cx="575.7" cy="210.7" r="2.35" fill="#8c93a4"/><circle cx="537.5" cy="217.2" r="2.35" fill="#c4405f"/><circle cx="570.7" cy="223.5" r="2.35" fill="#8c93a4"/><circle cx="536.3" cy="229.4" r="2.35" fill="#6aaedb"/><circle cx="552.2" cy="231.7" r="2.35" fill="#6aaedb"/><circle cx="548.7" cy="236.9" r="2.35" fill="#8c93a4"/><circle cx="534.0" cy="238.0" r="2.35" fill="#78b3bf"/><circle cx="648.8" cy="175.8" r="2.35" fill="#8c93a4"/><circle cx="602.7" cy="299.0" r="2.35" fill="#c4405f"/><circle cx="561.7" cy="305.5" r="2.35" fill="#6aaedb"/><circle cx="555.0" cy="314.4" r="2.35" fill="#c4405f"/><circle cx="648.9" cy="301.9" r="2.35" fill="#78b3bf"/><circle cx="630.7" cy="314.2" r="2.35" fill="#78b3bf"/><circle cx="671.0" cy="314.4" r="2.35" fill="#78b3bf"/><circle cx="612.4" cy="323.0" r="2.35" fill="#c4405f"/><circle cx="615.0" cy="323.0" r="2.35" fill="#c4405f"/><circle cx="619.3" cy="322.4" r="2.35" fill="#6aaedb"/><circle cx="625.1" cy="322.8" r="2.35" fill="#78b3bf"/><circle cx="672.6" cy="320.9" r="2.35" fill="#c4405f"/><circle cx="548.0" cy="331.0" r="2.35" fill="#6aaedb"/><circle cx="549.6" cy="334.2" r="2.35" fill="#6aaedb"/><circle cx="558.2" cy="337.9" r="2.35" fill="#6aaedb"/><circle cx="549.6" cy="347.8" r="2.35" fill="#6aaedb"/><circle cx="569.2" cy="347.8" r="2.35" fill="#6aaedb"/><circle cx="651.7" cy="350.4" r="2.35" fill="#6aaedb"/><circle cx="664.6" cy="352.2" r="2.35" fill="#c4405f"/><circle cx="663.5" cy="357.6" r="2.35" fill="#6aaedb"/><circle cx="586.3" cy="363.0" r="2.35" fill="#c4405f"/><circle cx="576.6" cy="370.5" r="2.35" fill="#6aaedb"/><circle cx="580.0" cy="379.6" r="2.35" fill="#8c93a4"/><circle cx="602.5" cy="375.7" r="2.35" fill="#c4405f"/><circle cx="548.7" cy="391.4" r="2.35" fill="#6aaedb"/><circle cx="635.9" cy="397.3" r="2.35" fill="#78b3bf"/><circle cx="656.0" cy="407.6" r="2.35" fill="#6aaedb"/><circle cx="624.0" cy="423.4" r="2.35" fill="#c4405f"/><circle cx="661.4" cy="291.0" r="2.35" fill="#c4405f"/><circle cx="580.4" cy="435.6" r="2.35" fill="#8c93a4"/><circle cx="600.3" cy="435.6" r="2.35" fill="#6aaedb"/><circle cx="631.6" cy="433.5" r="2.35" fill="#78b3bf"/><circle cx="644.8" cy="446.0" r="2.35" fill="#6aaedb"/><circle cx="666.8" cy="449.6" r="2.35" fill="#6aaedb"/><circle cx="671.7" cy="448.6" r="2.35" fill="#6aaedb"/><circle cx="605.3" cy="455.7" r="2.35" fill="#c4405f"/><circle cx="655.3" cy="465.4" r="2.35" fill="#c4405f"/><circle cx="548.7" cy="464.8" r="2.35" fill="#6aaedb"/><circle cx="538.3" cy="468.6" r="2.35" fill="#8c93a4"/><circle cx="624.7" cy="477.7" r="2.35" fill="#78b3bf"/><circle cx="545.9" cy="487.4" r="2.35" fill="#78b3bf"/><circle cx="622.3" cy="281.8" r="2.35" fill="#c4405f"/><circle cx="673.7" cy="281.8" r="2.35" fill="#c4405f"/><circle cx="668.9" cy="288.5" r="2.35" fill="#78b3bf"/></g>
</svg>
<div style="position:absolute;left:36px;top:96px;width:910px;height:472px;overflow:hidden"><div style="position:absolute;left:-36px;top:-96px;width:0;height:0"><div class="ml" style="left:228.0px;top:142.77px;font-size:7.0px;font-weight:normal;color:#8691a6;opacity:0.95;transform:scaleX(1.116);text-shadow:0 0 1px #fff,0 0 2px #fff">Narberth</div>
<div class="ml" style="left:247.1px;top:271.37px;font-size:7.0px;font-weight:normal;color:#8691a6;opacity:0.95;transform:scaleX(1.149);text-shadow:0 0 1px #fff,0 0 2px #fff">Millbourne</div>
<div class="ml" style="left:214.0px;top:321.87px;font-size:7.0px;font-weight:normal;color:#8691a6;opacity:0.95;transform:scaleX(1.070);text-shadow:0 0 1px #fff,0 0 2px #fff">East Lansdowne</div>
<div class="ml" style="left:237.8px;top:341.12px;font-size:8.6px;font-weight:normal;color:#858fa2;-webkit-text-stroke:.38px #858fa2;opacity:0.92;transform:scaleX(1.161);text-shadow:0 0 1px #fff,0 0 2px #fff">Yeadon</div>
<div class="ml" style="left:89.5px;top:364.52px;font-size:8.6px;font-weight:normal;color:#858fa2;-webkit-text-stroke:.38px #858fa2;opacity:0.92;transform:scaleX(1.161);text-shadow:0 0 1px #fff,0 0 2px #fff">Springfield</div>
<div class="ml" style="left:187.0px;top:371.12px;font-size:8.6px;font-weight:normal;color:#858fa2;-webkit-text-stroke:.38px #858fa2;opacity:0.92;transform:scaleX(1.122);text-shadow:0 0 1px #fff,0 0 2px #fff">Upper Darby</div>
<div class="ml" style="left:173.0px;top:391.17px;font-size:7.0px;font-weight:normal;color:#8691a6;opacity:0.95;transform:scaleX(1.134);text-shadow:0 0 1px #fff,0 0 2px #fff">Aldan</div>
<div class="ml" style="left:233.9px;top:398.82px;font-size:8.6px;font-weight:normal;color:#858fa2;-webkit-text-stroke:.38px #858fa2;opacity:0.92;transform:scaleX(1.120);text-shadow:0 0 1px #fff,0 0 2px #fff">Darby</div>
<div class="ml" style="left:187.0px;top:418.87px;font-size:7.0px;font-weight:normal;color:#8691a6;opacity:0.95;transform:scaleX(1.138);text-shadow:0 0 1px #fff,0 0 2px #fff">Collingdale</div>
<div class="ml" style="left:245.2px;top:416.97px;font-size:7.0px;font-weight:normal;color:#8691a6;opacity:0.95;transform:scaleX(1.102);text-shadow:0 0 1px #fff,0 0 2px #fff">Colwyn</div>
<div class="ml" style="left:93.0px;top:424.37px;font-size:7.0px;font-weight:normal;color:#8691a6;opacity:0.95;transform:scaleX(1.147);text-shadow:0 0 1px #fff,0 0 2px #fff">Morton</div>
<div class="ml" style="left:198.7px;top:434.17px;font-size:7.0px;font-weight:normal;color:#8691a6;opacity:0.95;transform:scaleX(1.095);text-shadow:0 0 1px #fff,0 0 2px #fff">Sharon Hill</div>
<div class="ml" style="left:19.5px;top:445.62px;font-size:8.6px;font-weight:normal;color:#858fa2;-webkit-text-stroke:.38px #858fa2;opacity:0.92;transform:scaleX(1.197);text-shadow:0 0 1px #fff,0 0 2px #fff">Swarthmore</div>
<div class="ml" style="left:162.8px;top:452.07px;font-size:7.0px;font-weight:normal;color:#8691a6;opacity:0.95;transform:scaleX(1.112);text-shadow:0 0 1px #fff,0 0 2px #fff">Glenolden</div>
<div class="ml" style="left:178.8px;top:477.87px;font-size:7.0px;font-weight:normal;color:#8691a6;opacity:0.95;transform:scaleX(1.123);text-shadow:0 0 1px #fff,0 0 2px #fff">Folcroft</div>
<div class="ml" style="left:115.2px;top:486.47px;font-size:7.0px;font-weight:normal;color:#8691a6;opacity:0.95;transform:scaleX(1.074);text-shadow:0 0 1px #fff,0 0 2px #fff">Prospect Park</div>
<div class="ml" style="left:85.6px;top:505.57px;font-size:7.0px;font-weight:normal;color:#8691a6;opacity:0.95;transform:scaleX(1.078);text-shadow:0 0 1px #fff,0 0 2px #fff">Ridley Park</div>
<div class="ml" style="left:397.0px;top:549.27px;font-size:7.0px;font-weight:normal;color:#8691a6;opacity:0.95;transform:scaleX(1.095);text-shadow:0 0 1px #fff,0 0 2px #fff">National Park</div>
<div class="ml" style="left:765.4px;top:133.87px;font-size:7.0px;font-weight:normal;color:#8691a6;opacity:0.95;transform:scaleX(1.105);text-shadow:0 0 1px #fff,0 0 2px #fff">Riverton</div>
<div class="ml" style="left:804.9px;top:143.07px;font-size:7.0px;font-weight:normal;color:#8691a6;opacity:0.95;transform:scaleX(1.109);text-shadow:0 0 1px #fff,0 0 2px #fff">Riverton</div>
<div class="ml" style="left:736.9px;top:146.57px;font-size:7.0px;font-weight:normal;color:#8691a6;opacity:0.95;transform:scaleX(1.079);text-shadow:0 0 1px #fff,0 0 2px #fff">Palmyra</div>
<div class="ml" style="left:800.2px;top:175.72px;font-size:8.6px;font-weight:normal;color:#858fa2;-webkit-text-stroke:.38px #858fa2;opacity:0.92;transform:scaleX(1.126);text-shadow:0 0 1px #fff,0 0 2px #fff">Cinnaminson</div>
<div class="ml" style="left:910.8px;top:260.32px;font-size:8.6px;font-weight:normal;color:#858fa2;-webkit-text-stroke:.38px #858fa2;opacity:0.92;transform:scaleX(1.136);text-shadow:0 0 1px #fff,0 0 2px #fff">Moorestown</div>
<div class="ml" style="left:659.8px;top:291.12px;font-size:8.6px;font-weight:normal;color:#858fa2;-webkit-text-stroke:.38px #858fa2;opacity:0.92;transform:scaleX(1.100);text-shadow:0 0 1px #fff,0 0 2px #fff">Pennsauken</div>
<div class="ml" style="left:801.0px;top:301.42px;font-size:8.6px;font-weight:normal;color:#858fa2;-webkit-text-stroke:.38px #858fa2;opacity:0.92;transform:scaleX(1.115);text-shadow:0 0 1px #fff,0 0 2px #fff">Maple Shade</div>
<div class="ml" style="left:643.6px;top:317.37px;font-size:7.0px;font-weight:normal;color:#8691a6;opacity:0.95;transform:scaleX(1.113);text-shadow:0 0 1px #fff,0 0 2px #fff">Merchantville</div>
<div class="ml" style="left:723.1px;top:352.42px;font-size:8.6px;font-weight:normal;color:#858fa2;-webkit-text-stroke:.38px #858fa2;opacity:0.92;transform:scaleX(1.104);text-shadow:0 0 1px #fff,0 0 2px #fff">Cherry Hill</div>
<div class="ml" style="left:627.4px;top:399.82px;font-size:8.6px;font-weight:normal;color:#858fa2;-webkit-text-stroke:.38px #858fa2;opacity:0.92;transform:scaleX(1.151);text-shadow:0 0 1px #fff,0 0 2px #fff">Collingswood</div>
<div class="ml" style="left:585.5px;top:458.72px;font-size:8.6px;font-weight:normal;color:#858fa2;-webkit-text-stroke:.38px #858fa2;opacity:0.92;transform:scaleX(1.155);text-shadow:0 0 1px #fff,0 0 2px #fff">Haddon</div>
<div class="ml" style="left:526.6px;top:474.92px;font-size:8.6px;font-weight:normal;color:#858fa2;-webkit-text-stroke:.38px #858fa2;opacity:0.92;transform:scaleX(1.097);text-shadow:0 0 1px #fff,0 0 2px #fff">Gloucester City</div>
<div class="ml" style="left:636.9px;top:478.27px;font-size:7.0px;font-weight:normal;color:#8691a6;opacity:0.95;transform:scaleX(1.142);text-shadow:0 0 1px #fff,0 0 2px #fff">Audubon</div>
<div class="ml" style="left:703.7px;top:475.72px;font-size:8.6px;font-weight:normal;color:#858fa2;-webkit-text-stroke:.38px #858fa2;opacity:0.92;transform:scaleX(1.163);text-shadow:0 0 1px #fff,0 0 2px #fff">Haddonfield</div>
<div class="ml" style="left:530.2px;top:513.77px;font-size:7.0px;font-weight:normal;color:#8691a6;opacity:0.95;transform:scaleX(1.138);text-shadow:0 0 1px #fff,0 0 2px #fff">Brooklawn</div>
<div class="ml" style="left:583.2px;top:512.97px;font-size:7.0px;font-weight:normal;color:#8691a6;opacity:0.95;transform:scaleX(1.123);text-shadow:0 0 1px #fff,0 0 2px #fff">Mount Ephraim</div>
<div class="ml" style="left:643.2px;top:516.57px;font-size:7.0px;font-weight:normal;color:#8691a6;opacity:0.95;transform:scaleX(1.104);text-shadow:0 0 1px #fff,0 0 2px #fff">Haddon Heights</div>
<div class="ml" style="left:520.7px;top:536.77px;font-size:7.0px;font-weight:normal;color:#8691a6;opacity:0.95;transform:scaleX(1.105);text-shadow:0 0 1px #fff,0 0 2px #fff">Westville</div>
<div class="ml" style="left:585.5px;top:543.32px;font-size:8.6px;font-weight:normal;color:#858fa2;-webkit-text-stroke:.38px #858fa2;opacity:0.92;transform:scaleX(1.162);text-shadow:0 0 1px #fff,0 0 2px #fff">Bellmawr</div>
<div class="ml" style="left:673.3px;top:552.17px;font-size:7.0px;font-weight:normal;color:#8691a6;opacity:0.95;transform:scaleX(1.124);text-shadow:0 0 1px #fff,0 0 2px #fff">Barrington</div>
<div class="ml" style="left:734.9px;top:546.97px;font-size:7.0px;font-weight:normal;color:#8691a6;opacity:0.95;transform:scaleX(1.072);text-shadow:0 0 1px #fff,0 0 2px #fff">Lawnside</div>
<div class="ml" style="left:411.0px;top:300.13px;font-size:12.6px;font-weight:bold;color:#78829a;opacity:0.95;transform:scaleX(0.982);text-shadow:0 0 1px #fff,0 0 2px #fff">PHILADELPHIA</div>
<div class="ml" style="left:526.8px;top:323.86px;font-size:10.2px;font-weight:bold;color:#7d889d;opacity:0.95;transform:scaleX(1.099);text-shadow:0 0 1px #fff,0 0 2px #fff">CAMDEN</div>
<div class="ml" style="left:750px;top:125px;font-size:5.8px;font-style:italic;color:#aab1ba;transform:rotate(-24deg);letter-spacing:.2px">Delaware River</div>
<div class="ml" style="left:579px;top:250.5px;font-size:5.8px;font-style:italic;color:#aab1ba;transform:rotate(-17deg);letter-spacing:.2px">Delaware River</div>
<div class="ml" style="left:449px;top:505.5px;font-size:5.8px;font-style:italic;color:#aab1ba;transform:rotate(-3deg);letter-spacing:.2px">Delaware River</div>
<div class="ml" style="left:603px;top:138px;font-size:5.2px;font-style:italic;color:#aab1ba;transform:rotate(58deg);letter-spacing:.2px">Frankford Creek</div></div></div>
<div id="legend"></div>
<div class="t" style="left:73.2px;top:135.01px;font-size:10.5px;color:#2c2c2c;">Pharmacies</div>
<div class="t" style="left:73.2px;top:159.22px;font-size:8.95px;color:#6c6c6c;">Type of store</div>
<div class="t" style="left:87.4px;top:181.79px;font-size:6.75px;color:#2e2e2e;">DRUG STORES AND</div>
<div class="t" style="left:87.4px;top:190.99px;font-size:6.75px;color:#2e2e2e;">PROPRIETARY STORES</div>
<div class="t" style="left:91.0px;top:208.79px;font-size:6.75px;color:#2e2e2e;">DRUG STORES</div>
<div class="t" style="left:85.9px;top:226.99px;font-size:6.75px;color:#2e2e2e;">PROPRIETARY (NON-</div>
<div class="t" style="left:85.9px;top:236.09px;font-size:6.75px;color:#2e2e2e;">PRESCRIPTION MEDICINE)</div>
<div class="t" style="left:85.9px;top:244.79px;font-size:6.75px;color:#2e2e2e;">STORES</div>
<svg style="position:absolute;left:73.0px;top:185.2px" width="8" height="8"><circle cx="4" cy="4" r="1.6" fill="#93a8c4" stroke="#8a94a6" stroke-width=".8"/></svg>
<svg style="position:absolute;left:74.8px;top:207.6px" width="8" height="8"><circle cx="4" cy="4" r="1.9" fill="#9c4a5c" stroke="#9a8088" stroke-width=".8"/></svg>
<svg style="position:absolute;left:72.0px;top:234.7px" width="8" height="8"><circle cx="4" cy="4" r="1.5" fill="#f0edc8" stroke="#a9ad5a" stroke-width=".8"/></svg>
<div class="t" style="left:772px;top:555.6px;font-size:9.1px;color:#3c3c3c;background:rgba(255,255,255,.6);padding:1px 3px 2px 2px">© CARTO, © OpenStreetMap <span style="color:#111">contributors</span></div>
<div id="panel"></div>
<svg width="226" height="472" viewBox="946 96 226 472" style="position:absolute;left:946px;top:96px" fill="#1edc96">
<rect x="982.35" y="395.22" width="10.74" height="19.08"/><rect x="993.79" y="379.33" width="10.74" height="34.97"/><rect x="1005.23" y="358.66" width="10.74" height="55.64"/><rect x="1016.67" y="357.07" width="10.74" height="57.23"/><rect x="1028.11" y="342.76" width="10.74" height="71.54"/><rect x="1039.55" y="314.15" width="10.74" height="100.15"/><rect x="1050.99" y="306.20" width="10.74" height="108.10"/><rect x="1062.43" y="337.99" width="10.74" height="76.31"/><rect x="1073.87" y="330.05" width="10.74" height="84.25"/><rect x="1085.31" y="355.48" width="10.74" height="58.82"/><rect x="1096.75" y="371.38" width="10.74" height="42.92"/><rect x="1108.19" y="380.92" width="10.74" height="33.38"/><rect x="1119.63" y="407.94" width="10.74" height="6.36"/><rect x="1131.07" y="406.35" width="10.74" height="7.95"/><rect x="1142.51" y="412.71" width="10.74" height="1.59"/>
<rect x="981.80" y="566.71" width="10.80" height="33.29"/><rect x="1016.30" y="545.70" width="10.50" height="54.30"/><rect x="1027.40" y="524.49" width="10.80" height="75.51"/><rect x="1062.20" y="553.78" width="10.40" height="46.22"/><rect x="1073.30" y="528.53" width="10.70" height="71.47"/><rect x="1096.40" y="549.13" width="10.80" height="50.87"/><rect x="1119.80" y="520.45" width="10.50" height="79.55"/>
</svg>
<div class="t" style="left:959.3px;top:111.07px;font-size:10.55px;color:#2c2c2c;">Total number of pharmacies</div><div class="t" style="left:959.3px;top:134.64px;font-size:9.05px;color:#707070;">Keep track of the total amount of pharmacies that</div><div class="t" style="left:959.3px;top:150.44px;font-size:9.05px;color:#707070;">meet the ranges selected on the widgets below</div><div class="t" style="left:962.0px;top:174.08px;font-size:18.1px;color:#000;font-weight:bold;">477</div><div class="t" style="left:959.3px;top:231.25px;font-size:10.45px;color:#2c2c2c;">Population 60+</div><div class="t" style="left:959.3px;top:254.32px;font-size:8.95px;color:#707070;">Select a range of values to filter</div><div class="t" style="left:959.3px;top:278.02px;font-size:8.95px;color:#1f1f1f;">All selected</div><div class="t" style="left:959.3px;top:464.61px;font-size:10.5px;color:#2c2c2c;">Household income 65-74</div><div class="t" style="left:959.3px;top:492.22px;font-size:8.95px;color:#1f1f1f;">All selected</div><div class="t" style="left:965.5px;top:410.90px;font-size:7.2px;color:#222;">0</div><div class="t" style="left:965.5px;top:395.01px;font-size:7.2px;color:#222;">10</div><div class="t" style="left:965.5px;top:379.11px;font-size:7.2px;color:#222;">20</div><div class="t" style="left:965.5px;top:363.21px;font-size:7.2px;color:#222;">30</div><div class="t" style="left:965.5px;top:347.32px;font-size:7.2px;color:#222;">40</div><div class="t" style="left:965.5px;top:331.42px;font-size:7.2px;color:#222;">50</div><div class="t" style="left:965.5px;top:315.52px;font-size:7.2px;color:#222;">60</div><div class="t" style="left:982.3px;top:424.10px;font-size:7.2px;color:#222;">340</div><div class="t" style="left:1033.0px;top:424.10px;font-size:7.2px;color:#222;">5.8k</div><div class="t" style="left:1091.5px;top:424.10px;font-size:7.2px;color:#222;">11k</div><div class="t" style="left:1143.0px;top:424.10px;font-size:7.2px;color:#222;">17k</div><div class="t" style="left:965.7px;top:562.40px;font-size:7.2px;color:#222;">30</div><div class="t" style="left:965.7px;top:542.20px;font-size:7.2px;color:#222;">40</div><div class="t" style="left:965.7px;top:522.00px;font-size:7.2px;color:#222;">50</div>
</div>
<div class="ln" style="left:36px;top:95px;width:1136px;height:1px"></div>
<div class="ln" style="left:36px;top:568px;width:1136px;height:1px"></div>
<div class="ln" style="left:36px;top:95px;width:1px;height:474px;background:#dcdcdc"></div>
<div class="t" id="pub" style="left:36px;top:582.9px;font-size:10.7px;color:#555;transform:scaleX(1.106);transform-origin:0 0">Publish dashboard</div>
<div class="code" id="c3"><span style="top:18px"><span class="b">cmap.publish</span>(<span class="g">'ph_pharmacies_dashboard'</span>, <span class="b">password=</span><span class="g">'MY_PASS'</span>, <span class="b">if_exists=</span><span class="g">'replace'</span>)</span></div>
</body></html>
